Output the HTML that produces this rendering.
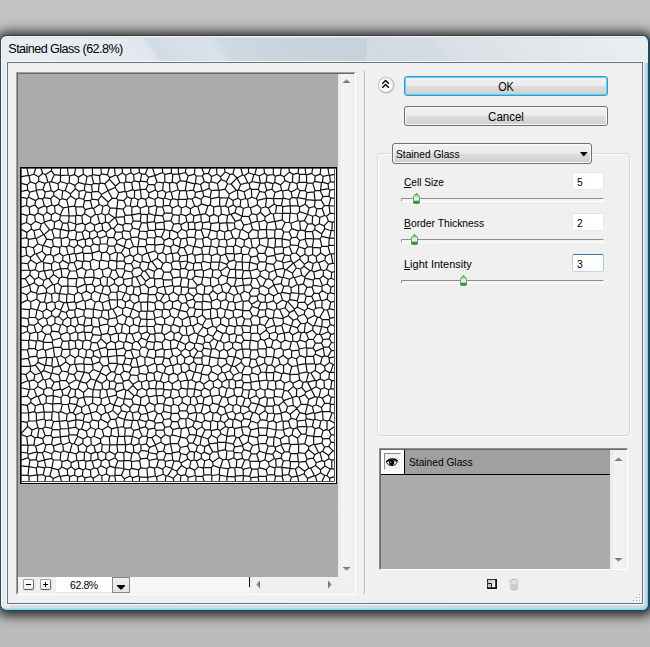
<!DOCTYPE html>
<html><head><meta charset="utf-8"><title>Stained Glass</title>
<style>
*{box-sizing:border-box;margin:0;padding:0}
html,body{width:650px;height:647px;overflow:hidden}
body{position:relative;background:#bfbfbf;font-family:"Liberation Sans",sans-serif;font-size:11px;color:#000}
.abs{position:absolute}
#bg{left:0;top:0;width:650px;height:647px;background:linear-gradient(#c2c2c2 0,#c1c1c1 300px,#bcbcbc 100%)}
#win{left:0;top:35px;width:650px;height:576px;border-radius:7px;background:#d3dde6;
 box-shadow:0 1px 12px 4px rgba(0,0,0,.8);border:1px solid #3a3e42;border-left-color:#3c464d;border-right:2px solid #1d4a5c;border-bottom-color:#1d4a5c}
#winin{left:0;top:0;width:647px;height:574px;border-radius:6px;border:1px solid #f4f8fb;border-right-color:#7dcdeb;border-bottom-color:#86d6f2;
 background:linear-gradient(90deg,#e3eaf0 0,#e3eaf0 8px,#d3dde6 9px,#d0dbe4 100%);box-shadow:inset -1px -1px 0 rgba(134,214,242,.45)}
#tbar{left:1px;top:1px;width:645px;height:25px;border-radius:5px 5px 0 0;background:linear-gradient(90deg,rgba(255,255,255,0) 363px,rgba(255,255,255,.2) 364px),linear-gradient(55deg,#e8eef3 1.32%,#e4ebf1 16.39%,#e0e7ee 23.32%,#d1dbe4 24.38%,#d6dfe7 27.69%,#d9e2ea 33.27%,#cfd9e2 35.38%,#c7d2dc 46.53%,#c6d1da 58.59%,#c8d3dc 67.03%,#cfd9e1 68.24%,#d6dfe6 79.69%,#e0e7ed 91.75%,#e5ebf0 98.98%)}
#title{left:8.3px;top:41.6px;font-size:12.6px;line-height:14px;letter-spacing:-.55px;white-space:nowrap}
#client{left:6px;top:61px;width:638px;height:544px;background:#6d7277;border:1px solid #f6f9fb;padding:1px}
#client div{width:100%;height:100%;background:#f0f0f0}
.t{white-space:nowrap;line-height:13px;font-size:11.5px;transform-origin:0 50%}
u{text-decoration:underline}
</style></head><body>
<div id="bg" class="abs"></div>
<div id="win" class="abs"><div id="winin" class="abs"><div id="tbar" class="abs"></div></div></div>
<div id="title" class="abs">Stained Glass (62.8%)</div>
<div id="client" class="abs"><div></div></div>

<!-- preview panel -->
<div class="abs" style="left:16px;top:72px;width:340px;height:523px;background:#f0f0f0;border:1px solid #a0a0a0;border-right-color:#fff;border-bottom-color:#fff"></div>
<div class="abs" style="left:17px;top:73px;width:337px;height:520px;border-left:1px solid #696969;border-top:1px solid #696969"></div>
<div class="abs" style="left:18px;top:74px;width:320px;height:503px;background:#ababab"></div>
<!-- stained glass image -->
<svg class="abs" style="left:20px;top:167px" width="318" height="318" viewBox="0 0 318 318">
<defs><clipPath id="cp"><rect x="0" y="0" width="317" height="317"/></clipPath></defs>
<rect x="0" y="0" width="317" height="317" fill="#fff"/>
<g clip-path="url(#cp)"><path fill="none" stroke="#111" stroke-width="1.2" stroke-linecap="round" d="M7.7 132.9l-7.7 3.8M7.7 132.9l-1-5.1M6.7 127.8l-6.7-2.7M8 151.7l-8-1.1M8 151.7l1.2-1.2M9.2 150.5l.1-7.8M9.3 142.7l-9.3-.8M153.7 57.1l5.3-.7M159.3 48.3l-.3 8.1M159.3 48.3l-6.3-.7M153.7 57.1l-2.9-3.5M150.8 53.6l2.2-6M253.1 16.7l-1.1 5.5M253.1 16.7l-7-1.8M246.1 14.9l-1.4 1M244.7 15.9l2.1 7.5M252 22.2l-5.2 1.2M254.8 15.4l-1.7 1.3M254.8 15.4l5.7 2.5M261.6 23.3l-1.1-5.4M255 25.4l6.6-2.1M255 25.4l-3-3.2M255.2 9.2l-1.9-1.7M247 8.3l6.3-.8M254.8 15.4l.4-6.2M247 8.3l-.9 6.6M262.1 71.8l7.7 1.5M262.1 71.8l.1 7.9M263.6 80.9l-1.4-1.2M263.6 80.9l5.8-1.4M269.8 73.3l.8 4.5M269.4 79.5l1.2-1.7M263.8 65l-1.8 6.7M263.8 65l5.3-.2M271.6 70.8l-2.5-6M271.6 70.8l-1.8 2.5M262 71.7l.1 .1M255.1 80.1l.4-8.7M262 71.7l-6.5-.3M255.1 80.1l7.1-.4M212.9 6.8l1.7-6.8M212.9 6.8l-2.8 .5M204.1 0l1.1 5M205.2 5l4.9 2.3M190.1 30.5l1.3-6.9M190.1 30.5l-6.3-1.4M183.8 29.1l-1.2-4.9M182.6 24.2l6.5-2.8M191.4 23.6l-2.3-2.2M196.9 7.3l-5.3 2.2M196.9 7.3l3.7 2.5M200.6 9.8l.6 2.7M201.2 12.5l-3.8 4M197.4 16.5l-6.5-1.8M191.6 9.5l-.7 5.2M205.2 5l-4.6 4.8M210.1 7.3l-3.8 7.5M206.3 14.8l-5.1-2.3M198.6 22.9l-1.2-6.4M199.2 23.4l-.6-.5M207.6 16.8l-1.3-2M199.2 23.4l5.9-1.3M207.6 16.8l-2.5 5.3M189.1 16.1l0 5.3M198.6 22.9l-7.2 .7M189.1 16.1l1.8-1.4M304.9 299l-.4-4.4M300.5 302.8l4.4-3.8M300.5 302.8l-5-4.3M296.1 295.7l-.6 2.8M296.1 295.7l6-2.1M302.1 293.6l2.4 1M311.8 301.6l5.2 1.5M311.8 301.6l0-8.4M311.8 293.2l5.2-.8M310.3 302l-5.4-3M310.3 302l1.5-.4M308.9 291.7l-4.4 2.9M308.9 291.7l2.9 1.5M16.1 292.6l1.9 2M16.1 292.6l-6.1 .5M10 293.1l-1.1 6.6M16.2 301l-7.3-1.3M16.2 301l1.3-1.3M17.5 299.7l.5-5.1M49.9 285.2l2.2-8.3M49.9 285.2l6.2 1.8M56.1 287l2.7-2.3M58.8 284.7l-.8-5.9M58 278.8l-3.9-2.2M54.1 276.6l-2 .3M80.9 93.2l.9-7.3M80.9 93.2l7.6 1.3M88.5 94.5l1.4-1.3M89.9 93.2l-.2-5.5M89.7 87.7l-3.2-2.8M81.8 85.9l4.7-1M95.9 85l-6.2 2.7M97.5 86l-1.6-1M97.5 86l-.9 8.1M96.6 94.1l-6.7-.9M10.8 124.4l-1.3-6.2M10.8 124.4l5.6 1.8M16.4 126.2l2.2-7M18.6 119.2l-4.4-3.4M14.2 115.8l-4.7 2.4M10.8 124.4l-4.1 3.4M0 121.3l9.3-3.1M9.3 118.2l.2 0M8.9 309.1l-.9-.8M8.9 309.1l8.2-1.3M17.1 307.8l-.9-6.8M8.9 299.7l0 0M8 308.3l.9-8.6M9.2 222.6l-9.2-2.1M7.4 229.1l1.8-6.5M7.4 229.1l-7.4 .9M57.9 221.6l2.2-7M56.3 212.7l3.8 1.9M55.5 222.7l2.4-1.1M55.5 222.7l-4.5-1.2M56.3 212.7l-7.4 4M48.9 216.7l.2 2.5M49.1 219.2l1.9 2.3M10 293.1l-1.9-2.5M8.1 290.6l.1-3.5M16.1 292.6l1.5-7.3M17.6 285.3l-.5-.4M17.1 284.9l-8.9 2.2M17.9 195.4l-2.5 2.8M17.9 195.4l7.1 3.2M15.4 198.2l5.6 7.4M25 198.6l-1.4 5M23.6 203.6l-2.6 2M32.1 206l-.6 .5M31.5 206.5l-7.9-2.9M25.6 198.2l6.2 .9M33 200.3l-1.2-1.2M32.1 206l.9-5.7M25.6 198.2l-.6 .4M5.8 207.7l2.1 6M5.8 207.7l4.5-3.8M10.3 203.9l4.5 3.9M14.8 207.8l-1 5M13.8 212.8l-4.7 1.4M7.9 213.7l1.2 .5M0 217l7.9-3.3M0 206.5l5.8 1.2M10.5 199.4l-10.5-.1M10.5 199.4l-.2 4.5M10.5 199.4l.1-.1M10.6 199.3l4.8-1.1M21 205.6l0 .1M21 205.7l-6.2 2.1M10 222l-.8 .6M10 222l-.9-7.8M94 238.1l3.6-7.8M94 238.1l-3.9-1.8M88.5 230l1.6 6.3M88.5 230l7.7-1.9M96.2 228.1l1.4 2.2M166.7 110.9l2.1 1.5M166.7 110.9l-5.1 0M161.5 119.9l6.4 .2M168.8 112.4l-.9 7.7M161.5 119.9l-1.2-1.1M160.3 118.8l1.3-7.9M160.3 118.8l-6.5 .8M161.5 119.9l-.5 7.4M158.8 128.6l2.2-1.3M158.8 128.6l-5.5-3.6M153.3 125l.5-5.4M158 133.1l.8-4.5M152.5 135.1l-2.8-1.9M152.5 135.1l5.5-2M149.7 133.2l-1.1-5.2M153.3 125l-4.7 3M113.8 93l-.4-3.4M113.8 93l-2.5 3.6M111.3 96.6l-5.7-.2M110.2 87.9l-5.3 2.4M110.2 87.9l3.2 1.7M104.9 90.3l-1 3.6M103.9 93.9l1.7 2.5M122.2 94.4l-.1-5.9M120.4 95.8l1.8-1.4M117.9 86.5l4.2 2M117.9 86.5l-4.5 3.1M120.4 95.8l-6.6-2.8M109.2 81.9l1 6M109.2 81.9l-4.6-1.6M104.6 80.3l-3.3 5.3M101.3 85.6l3.6 4.7M96.8 94.3l7.1-.4M96.6 94.1l.2 .2M97.5 86l3.8-.4M96.8 94.3l-.1 7.2M104 101.8l-7.3-.3M104 101.8l1.6-5.4M9.1 157.7l-1.1-6M7.3 159.9l-7.3-1.3M9.1 157.7l-1.8 2.2M112.2 111l-.2 7.5M106.9 119.7l5.1-1.2M112.2 111l-8.4 1.3M106.9 119.7l-3.4-3M103.5 116.7l.3-4.4M95.4 102.8l1.3-1.3M95.4 102.8l3.3 7M105 103.6l-1-1.8M105 103.6l-2.7 6.7M98.7 109.8l3.6 .5M14.2 115.8l.6-3.2M18.4 110.3l-3.6 2.3M18.4 110.3l5.6 3.1M18.6 119.2l4.2-1M24 113.4l-1.2 4.8M16.4 126.2l.7 1.1M22.8 118.2l3.5 3.6M26.6 125.5l-.3-3.7M26.6 125.5l-.4 .3M17.1 127.3l9.1-1.5M10.9 141.4l-.2-6.6M10.9 141.4l6.1 1.6M17 143l.4-.2M17.4 142.8l2.8-7.8M10.7 134.8l6.1-2.8M16.8 132l3.4 3M9.3 142.7l1.6-1.3M7.7 132.9l3 1.9M9.2 150.5l6.4 0M15.6 150.5l1.4-7.5M22.7 144.7l-5.3-1.9M22.7 144.7l.8 5.8M23.5 150.5l-5.3 2.6M15.6 150.5l2.6 2.6M24.5 135.1l-4.3-.1M26.4 136.4l-1.9-1.3M26.7 142l-.3-5.6M26.7 142l-4 2.7M17.1 127.3l-.3 4.7M24.5 135.1l1.7-9.3M174.7 56.2l6.5-1.7M174.7 56.2l-1.4-1.3M173.3 54.9l.5-6.1M173.8 48.8l6.3-1.5M181.2 54.5l-.3-6.8M180.9 47.7l-.8-.4M187.9 38.9l-2.5 7.8M187.9 38.9l-6.5-2M181.4 36.9l-3.5 2.7M177.9 39.6l2.2 7.7M185.4 46.7l-4.5 1M160.7 57.6l1 4.7M160.7 57.6l6.1-2.9M168.2 55.5l-1.4-.8M168.2 55.5l.4 7M161.7 62.3l4.8 2M168.6 62.5l-2.1 1.8M165.9 48.9l.9 5.8M161 47.2l4.9 1.7M161 47.2l-1.7 1.1M159 56.4l1.7 1.2M170.3 46.5l3.5 2.3M170.3 46.5l-4.4 2.4M173.3 54.9l-5.1 .6M175 62.2l-6.4 .3M175 62.2l-.3-6M167.4 70.2l-.9-5.9M167.4 70.2l7.3 .3M175 62.2l1.1 1M174.7 70.5l1.4-7.3M166.5 71.2l-5.5 .7M161 71.9l-3-1.9M166.5 71.2l.9-1M161.7 62.3l-4.1 3.6M158 70l-.4-4.1M153.7 57.1l-2.2 6M157.6 65.9l-6.1-2.8M193.7 47.4l4.7 2.1M193.7 47.4l-4.1 2M189.6 49.4l-.2 5.3M198.6 55.3l-7.6 1.3M198.6 55.3l-.2-5.8M189.4 54.7l1.6 1.9M182.5 55.9l-1.3-1.4M182.5 55.9l6.9-1.2M185.4 46.7l4.2 2.7M190.3 37.9l3.3 2M190.3 37.9l.6-6.3M193.6 39.9l6.1-1.1M190.9 31.6l8.2-1.5M199.7 38.8l0-8.1M199.7 30.7l-.6-.6M187.9 38.9l2.4-1M193.7 47.4l-.1-7.5M183.8 29.1l-2.7 3.2M181.1 32.3l.3 4.6M190.1 30.5l.8 1.1M199.2 23.4l-.1 6.7M209.2 27.1l-.6 3.4M207.9 31l.7-.5M205.1 22.1l4.1 5M207.9 31l-8.2-.3M215.1 61.2l-.7-5.2M210.7 64l4.4-2.8M210.7 64l-2.6-.6M208.1 63.4l-1.4-7.7M206.7 55.7l7.7 .3M215.1 61.2l5.3 2.1M220.7 52.6l-5.3 1.8M220.7 52.6l3.1 5.6M222.2 62.4l-1.8 .9M223.8 58.2l-1.6 4.2M214.4 56l1-1.6M204.8 65l-5.4-1.9M204.8 65l-.2 7M204.6 72l-5.4 1M197.2 64.7l-.3 6.5M197.2 64.7l2.2-1.6M196.9 71.2l2.3 1.8M208.1 63.4l-3.3 1.6M206.6 55.7l.1 0M199.7 56.4l6.9-.7M199.7 56.4l-.3 6.7M204.6 72l1.9 1.3M210.7 64l2.3 6.7M206.5 73.3l6.5-2.6M218.8 70.7l1.6-7.4M218.8 70.7l-2.9 1.4M213 70.7l2.9 1.4M199.2 73l-.5 6.2M190.9 79l.3-6.1M191.2 72.9l5.7-1.7M190.9 79l5.9 1.8M196.8 80.8l1.9-1.6M206.5 73.3l.7 5.7M207.2 79l-1.4 1.5M198.7 79.2l7.1 1.3M184 70.7l3.9-.5M184 70.7l-2.9-7.9M187.9 70.2l2.6-7.1M182.4 61.5l-1.3 1.3M182.4 61.5l7.9 1.1M190.3 62.6l.2 .5M197.2 64.7l-6.7-1.6M191.2 72.9l-3.3-2.7M176.1 63.2l5-.4M182.5 55.9l-.1 5.6M191 56.6l-.7 6M199.7 56.4l-1.1-1.1M161.6 110.9l-1.3-1.1M159.9 102.8l.4 7M168.5 103.6l-1.8 7.3M168.5 103.6l-3.4-2.3M159.9 102.8l1.1-1.1M165.1 101.3l-4.1 .4M176.1 176l6.8 1.4M184.8 175l-1.9 2.4M176.1 176l2.1-8.2M184.8 175l-.7-4.9M178.2 167.8l5.9 2.3M241 41.2l-3.6-3.3M237.4 37.9l0-4.6M241 41.2l4.5-1.4M245.5 39.8l1.1-8.6M246.6 31.2l-9.2 2.1M212.9 6.8l4 4.2M220.6 0l2 8M222.6 8l-5.7 3M222.6 8l1.8 .4M224.4 8.4l4.3-2.7M228.7 5.7l-.4-5.7M317 113.8l-5.9-2.6M317 103.4l-5.2 2.1M311.8 105.5l-.7 5.7M300.7 86.1l-.4-5.2M300.3 80.9l-7.5-.6M296.1 89.6l-3.5-2.1M296.1 89.6l4.6-3.5M292.6 87.5l.2-7.2M295.7 48.2l-3.1 1.1M299.8 50.5l-4.1-2.3M299.8 50.5l-.5 6.3M292.6 49.3l-.4 7.3M292.2 56.6l2.9 2.2M299.3 56.8l-4.2 2M246.9 80.2l-7.3-2.7M246.9 80.2l-2.2 6M236.1 81.1l3.5-3.6M236.1 81.1l2.3 5.3M238.4 86.4l6.3-.2M222.2 62.4l6.3 3.8M230.9 56.5l1.7 5.8M223.8 58.2l7.1-1.7M228.5 66.2l4.1-3.9M261.7 62.4l-5.3-.6M261.7 62.4l3.4-6.9M256.4 61.8l-1.3-7.1M255.1 54.7l7.1-1.8M262.2 52.9l2.9 2.6M262.7 24l5.6-1.1M262.7 24l.6 7.2M271.2 25.1l-2.9-2.2M263.3 31.2l6.4 1.3M271.2 25.1l1 5.2M272.2 30.3l-2.5 2.2M278.2 78.5l.6 1.2M278.8 79.7l6.1 2.2M284.9 81.9l2.8-2.1M287.7 79.8l-2.8-7.7M278.2 78.5l1.5-5M279.7 73.5l5.2-1.4M278.2 78.5l-7.6-.7M271.6 70.8l5.1-.6M279.7 73.5l-3-3.3M276.7 70.2l1.7-6.3M269.1 64.8l2.7-3.2M278.4 63.9l-6.6-2.3M269.4 55.4l-4.3 .1M263.8 65l-2.1-2.6M269.4 55.4l1.5 .9M270.9 56.3l.9 5.3M260.4 7.9l.9-7.9M260.4 7.9l-5.2 1.3M253.3 7.5l0-7.5M311.1 111.2l-2.8 1.3M308.3 112.5l-1.2 4.5M317 117.7l-6 2.4M311 120.1l-3.9-3.1M310.2 125.6l6.8 2.2M311 120.1l-.8 5.5M239.2 142.7l6.3 .3M239.2 142.7l-2 6M237.2 148.7l2.5 2.2M239.7 150.9l6-1.9M245.5 143l.2 6M244.7 158.7l4.5-7.3M244.7 158.7l-4.9-1.8M239.8 156.9l-.1-6M245.7 149l3.5 2.4M254.6 158.4l-2-7.2M246.3 161.2l8.3-2.8M244.7 158.7l1.6 2.5M249.2 151.4l3.4-.2M261.7 158.3l-5.8 1.1M261.7 158.3l1.6-2M254.6 158.4l1.3 1M263.3 156.3l-.2-4.7M263.1 151.6l-9.8-1.1M252.6 151.2l.7-.7M296.8 41.9l5.3-.6M295.7 48.2l1.1-6.3M299.8 50.5l4.7-2M304.5 48.5l-2.4-7.2M301 32.8l3.3 5.8M295.1 33.4l5.9-.6M294.4 39.5l2.4 2.4M294.4 39.5l.7-6.1M302.1 41.3l2.2-2.7M292.2 56.6l-4.3 .5M287.9 57.1l-3.5-3.5M292.6 49.3l-5-2M284.4 53.6l3.2-6.3M284.9 63.9l-4.4-1.1M287.9 57.1l-3 6.8M280.5 62.8l-.9-8.4M284.4 53.6l-4.8 .8M280.5 62.8l-2.1 1.1M270.9 56.3l7.2-2.8M279.6 54.4l-1.5-.9M289.1 41l5.3-1.5M289.1 41l-1.6 6.2M287.5 47.2l.1 .1M267.7 196.3l-4.1 2.2M263.6 198.5l-.1 7.3M267.7 196.3l4.1 3.2M263.5 205.8l6.2 1.6M269.7 207.4l2.1-7.9M237.5 158.3l2.3-1.4M246.3 161.2l0 1.9M237.5 158.3l.1 7.7M237.6 166l2.3 1.7M239.9 167.7l6.4-4.6M255.4 165l.5-5.6M255.4 165l-5.9 1.8M249.5 166.8l-3.2-3.7M276.2 252.5l-5-1.2M276.2 252.5l3.5-6.9M279.7 245.6l-2.8-4.2M276.9 241.4l-6.8 5.9M270.1 247.3l1.1 4M295.5 298.5l-4.8 2.7M300.5 302.8l.1 3M300.6 305.8l-5.2 3.2M295.4 309l-1-.4M290.7 301.2l3.7 7.4M286.8 317l.8-5.6M295.4 309l2.2 8M287.6 311.4l6.8-2.8M293.3 291.2l2.8 4.5M302.1 293.6l-2.2-7.9M293.3 291.2l1.5-3.5M299.9 285.7l-1.4-.1M294.8 287.7l3.7-2.1M304.5 280l-1.8 4.3M304.5 280l4.2-.7M302.7 284.3l5.9 4.2M308.7 279.3l4.2 4.6M312.9 283.9l-4.3 4.6M308.9 291.7l-.3-3.2M299.9 285.7l2.8-1.4M311.1 275.2l5.9 .8M311.1 275.2l-2.4 4.1M317 283.8l-4.1 .1M311.1 275.2l-1.7-3.8M317 267.8l-5.8 0M311.2 267.8l-1.8 3.6M309 263.5l8-5.8M309 263.5l2.2 4.3M311.5 175.5l-2.6 4.3M308.9 179.8l-5.3 .4M309.3 171.8l-6.3 .7M303 172.5l-1.5 3.7M311.5 175.5l-2.2-3.7M303.6 180.2l-2.1-4M263.5 222.5l1-6.3M263.5 222.5l.6 .9M270 214l-5.5 2.2M268 224l-3.9-.6M270 214l2.9 2.3M268 224l5.4-4.4M272.9 216.3l.5 3.3M17.1 307.8l.4 .3M17.5 299.7l7.2 1.1M24.7 300.8l-1.5 6.9M17.5 308.1l5.7-.4M94 238.2l6.5 1.4M94 238.2l-1.3 5.2M100.5 239.6l1 4M101.5 243.6l-3.5 4.5M92.7 243.4l5.3 4.7M90.1 236.3l-5.7 2.7M94 238.1l0 .1M85.8 245.4l-1.4-6.4M85.8 245.4l2.2 .7M92.7 243.4l-4.7 2.7M88 246.1l2.8 6.3M90.8 252.4l-3 3.5M85.8 245.4l-4.5 2.8M81.3 248.2l-.6 4M80.7 252.2l7.1 3.7M90.8 252.4l4.9-.1M98 248.1l0 2M95.7 252.3l2.3-2.2M107.1 245.3l-2.6 7.2M101.5 243.6l5.6 1.7M98 250.1l6.5 2.4M104.5 252.6l0-.1M103.4 259.7l-5.5 .8M103.4 259.7l1.1-7.1M95.7 252.3l1.7 8M97.4 260.3l.5 .2M112.5 253.7l-8-1.1M112.5 253.7l-1.6 6.9M103.4 259.7l1.9 1.6M105.3 261.3l5.6-.7M31.6 277.2l1.1-6.6M31.6 277.2l-5.8 .7M25.8 277.9l-2.2-2M23.6 275.9l-.9-4.3M22.7 271.6l2.5-2.9M32.7 270.6l-1.8-2.2M25.2 268.7l5.7-.3M15 270.9l-3.9-2.7M15 270.9l-1.1 6.9M13.9 277.8l-5.7 .6M6.7 269.7l4.4-1.5M6.7 269.7l1 8.3M7.7 278l.5 .4M15.7 279.3l-1.8-1.5M15.7 279.3l7.9-3.4M17.6 270.1l5.1 1.5M17.6 270.1l-2.6 .8M8.2 287.1l-.8-1.1M7.4 286l.8-7.6M17.1 284.9l-1.4-5.6M23.2 307.7l2.4 1.8M29.8 308.8l-4.2 .7M32.1 301.1l-2.3 7.7M32.1 301.1l-.2-.3M24.7 300.8l1.1-.8M31.9 300.8l-6.1-.8M18 294.6l6.4-1.5M25.8 300l-1.4-6.9M49.7 275.3l2.4 1.6M49.9 285.2l-1.1 .4M42.9 277.8l.5 6M49.7 275.3l-6.8 2.5M48.8 285.6l-5.4-1.8M33.4 278.9l7.8-2.5M42.9 277.8l-1.7-1.4M33.4 278.9l.8 4.9M34.2 283.8l6.6 1.7M43.4 283.8l-2.6 1.7M41.2 276.4l-.9-6.6M32.7 270.6l7.6-.8M33.4 278.9l-1.8-1.7M40.3 269.8l0 0M49.7 275.3l-1.4-6.4M40.3 269.8l8-.9M32.3 262.4l7.4 .4M30.9 268.4l1.4-6M40.3 269.8l-.6-7M58 278.8l4.7-2.4M64.4 285.5l-5.6-.8M66 284.5l.9-4.6M64.4 285.5l1.6-1M66.9 279.9l-4.2-3.5M57.7 269.2l-3.6 7.4M57.7 269.2l5.4 2.7M62.7 276.4l.4-4.5M40.2 293l.6-7.5M40.2 293l1.8 1.6M48.8 285.6l-1.2 7.5M47.6 293.1l-5.6 1.5M31.9 300.8l1.4-7.8M33.3 293l6.9 0M32.1 301.1l6.4 1.8M38.5 302.9l3.1-2.9M42 294.6l-.4 5.4M89.2 284.4l5.9 3.1M85.9 286.5l3.3-2.1M85.9 286.5l-.2 5.4M85.7 291.9l3.2 1.9M88.9 293.8l6.2-3.1M95.1 290.7l0-3.2M81.2 294.1l4.5-2.2M81.6 284.3l4.3 2.2M81.6 284.3l-4.1 1.6M81.2 294.1l-2.9-2M78.3 292.1l-.8-6.2M32.8 117.3l-6.5 4.5M34.3 117.7l.7 8M34.3 117.7l-1.5-.4M26.6 125.5l4.9 1.7M31.5 127.2l3.5-1.5M26.4 136.4l5.8-1.7M31.5 127.2l.7 7.5M24 113.4l2.8-1.9M32.8 117.3l-3.7-5.6M29.1 111.7l-2.3-.2M95.4 102.8l-3.5 .4M88.5 94.5l0 6.1M91.9 103.2l-3.4-2.6M29.1 111.7l4.3-4.1M33.4 107.6l6 3.8M34.3 117.7l3.5-1.4M37.8 116.3l1.6-4.9M41 101.9l-.5-.3M33.3 104.3l7.2-2.7M33.4 107.6l-.1-3.3M41 101.9l1 8M39.4 111.4l2.6-1.5M88.2 70.6l5.6-.3M88.2 70.6l-1.2 6.4M87 77l1.5 1.9M88.5 78.9l5.9 .2M93.8 70.3l2.9 3.4M94.4 79.1l2.2-2.5M96.6 76.6l.1-2.9M86.4 68.7l1.8 1.9M86.4 68.7l-.3-3.4M86.1 65.3l5.1-4.2M93.6 61.7l-2.4-.6M95.6 64.8l-2-3.1M95.6 64.8l-1.8 5.5M79.9 71.3l.5 5.6M80.4 76.9l6.6 .1M86.4 68.7l-6.5 2.6M86.5 84.9l2-6M79.2 83.9l2.6 2M79.2 83.9l-.1-5.7M79.1 78.2l1.3-1.3M95.9 85l-1.5-5.9M102 65.2l-6.4-.4M102.7 70.7l-6 3M102.7 70.7l-.7-5.5M104.4 79.9l-7.8-3.3M104.6 80.3l-.2-.4M104.4 79.9l1.8-7.1M106.2 72.8l-3.5-2.1M58.4 15.4l-.1-5.3M58.4 15.4l6.7 2M58.3 10.1l5.1-2.8M65.1 17.4l.6-.4M65.7 17l1.3-7.5M67 9.5l-3.6-2.2M73.7 16.3l-2-7.9M71.7 8.4l-4.7 1.1M71.6 17.9l-5.9-.9M71.6 17.9l2.1-1.6M8.4 8.3l-1.6-8.3M0 9.8l8.4-1.5M7.2 17.9l-7.2-1.8M7.2 17.9l3-3M10.2 14.9l-1.1-6.1M8.4 8.3l.7 .5M7.8 23.1l-.6-5.2M7.8 23.1l-7.8 1.5M86.1 65.3l-3.4-2.2M79.9 71.3l-2.5-2M82.7 63.1l-5.5 2.4M77.4 69.3l-.2-3.8M74.6 58.2l-.2 5M74.6 58.2l5-2.1M82.7 63.1l-.8-6.3M79.6 56.1l2.3 .7M77.2 65.5l-2.8-2.3M77.4 69.3l-5.2 2.9M79.1 78.2l-5.9-1.4M73.2 76.8l-1-4.6M7.4 183l-7.4-.3M7.4 183l1.8 7.1M8.4 191.4l-8.4 .9M9.2 190.1l-.8 1.3M9 181.5l6.3 .2M17.5 183.7l-2.2-2M9 181.5l-1.6 1.5M17.5 183.7l-.9 5.5M16.6 189.2l-7.4 .9M10.6 199.3l-2.2-7.9M16.6 189.2l1.7 2.2M17.9 195.4l.4-4M8.1 290.6l-8.1 3M7.4 286l-7.4-.9M12.1 263l-1 5.2M6.7 269.7l-6.2-2.6M12.1 263l-4.4-3.5M7.7 259.5l-7.2 7.6M13.8 212.8l4 3.1M21 205.7l2.3 6.5M23.3 212.2l-5.5 3.7M7.7 278l-7.7 .2M7.1 255.4l-7.1-1.3M7.1 255.4l.6 4.1M64.6 33.6l-.9-1.1M64.6 33.6l5.8-.1M70.4 33.5l1.5-1.4M71.9 32.1l-.5-6.5M71.4 25.6l-5.2-.7M63.7 32.5l2.5-7.6M72.3 24.8l-.9 .8M71.6 17.9l.7 6.9M65.1 17.4l-.8 5.6M64.3 23l1.9 1.9M88.5 46.8l-3.2 1.4M88.5 46.8l6.2 4M85.3 48.2l.2 6.9M94.7 50.8l-6.1 5.3M88.6 56.1l-3.1-1M77.5 47.8l4.1-1.3M77.5 47.8l2.1 8.3M81.6 46.5l3.7 1.7M81.9 56.8l3.6-1.7M91.2 61.1l-2.6-5M82.9 39.3l-1.3 7.2M82.9 39.3l4.6-1.4M88.5 46.8l1.6-6M87.5 37.9l2.6 2.9M76.1 213.4l5.7 3M82.6 221.7l-.8-5.3M76 213.5l.1-.1M82.6 221.7l-2.3 1.5M76 213.5l-2.6 9M80.3 223.2l-6.9-.7M100.5 239.6l3.1-3M97.6 230.3l6.3 1.9M103.6 236.6l.3-4.4M109.9 244l-2.8 1.3M109.9 244l.1-3.3M103.6 236.6l6.4 4.1M76.1 213.4l4.3-7.5M81.8 216.4l5.1-3.8M86.9 212.6l-.7-3.8M86.2 208.8l-5.8-2.9M126.9 144.4l-5.7-.5M126.9 144.4l.8-.6M127.7 143.8l-.2-8.9M121.2 143.9l-.4-8.5M127.5 134.9l-6.7 .5M113.3 109.7l2.9 .4M113.3 109.7l-1.6-4.7M116.2 110.1l4.4-1.9M111.7 105l1.8-3.4M113.5 101.6l6.2-1.2M120.6 108.2l2.2-4M119.7 100.4l3.1 3.8M103.8 112.3l-1.5-2M112.2 111l1.1-1.3M105 103.6l6.7 1.4M120.5 118.5l-4.3-8.4M124.6 117.2l-4.1 1.3M125.7 114.2l-5.1-6M124.6 117.2l1.1-3M111.3 96.6l2.2 5M120.4 95.8l-.7 4.6M114.1 120.1l5.6-.7M114.1 120.1l-1 6.8M119.7 119.4l1.3 7M113.1 126.9l5.4 2.2M118.5 129.1l2.5-2.7M120.5 118.5l-.8 .9M112 118.5l2.1 1.6M110.2 128.2l-4.4-2.4M106.9 119.7l-1.1 6.1M110.2 128.2l2.9-1.3M128 126.9l-7-.5M128.7 121l-.7 5.9M128.7 121l-4.1-3.8M133.7 111l.7-6.6M133.7 111l-3.5 .1M130.2 111.1l-5.1-7.2M134.4 104.4l-6.6-2.6M127.8 101.8l-2.7 2.1M122.8 104.2l2.3-.3M125.7 114.2l4.5-3.1M129 95.9l1.8-1.3M129 95.9l-1.2 5.9M130.8 94.6l1.2 0M132 94.6l5.2 7.1M137.2 101.7l-2.8 2.7M129 95.9l-6.8-1.5M152.9 111.2l7.4-1.4M159.9 102.8l-7.5-1M152.9 111.2l-2.6-6.4M150.3 104.8l2.1-3M110.4 71.6l.8-1M110.4 71.6l3.1 7.7M111.2 70.6l6.9-.7M113.5 79.3l3.9 .6M118.1 69.9l1.1 1.4M119.2 71.3l-1.2 8.2M117.4 79.9l.6-.4M109.8 64.6l1.4 6M109.8 64.6l-6.4-1M106.2 72.8l4.2-1.2M103.4 63.6l-1.4 1.6M109.2 81.9l4.3-2.6M117.9 86.5l-.5-6.6M141.1 101.3l2-4.8M137.2 101.7l3.9-.4M132 94.6l5.3-3.3M137.3 91.3l5.8 5.2M143.9 105.1l6.4-.3M143.9 105.1l-2.8-3.8M151.2 96.3l1.2 5.5M151.2 96.3l-5.1-1.3M146.1 95l-3 1.5M130.8 94.6l-2.9-8.5M122.1 88.5l5.1-2.6M127.9 86.1l-.7-.2M118 79.5l7.3 .2M127.2 85.9l-1.9-6.2M126 72.6l-6.8-1.3M126 72.6l.9 4.7M126.9 77.3l-1.6 2.4M25.6 198.2l1.1-7.8M31.8 199.1l.7-8.4M32.5 190.7l-5.8-.3M18.3 191.4l8.1-1.2M26.7 190.4l-.3-.2M18.2 153.1l-.3 2.5M9.1 157.7l5.2 .7M14.3 158.4l3.6-2.8M7.6 164.3l-7.6 3M7.6 164.3l2.3 2.4M9.9 166.7l-.6 6.2M8.6 173.5l-8.6-.4M8.6 173.5l.7-.6M7.3 159.9l.3 4.4M15.9 165l-1.6-6.6M15.9 165l-6 1.7M9 181.5l-.4-8M15.3 181.7l1.1-7.6M16.4 174.1l-7.1-1.2M119.1 134.4l-.6-5.3M119.1 134.4l-4.8 2.2M110.2 128.2l-.4 4.7M109.8 132.9l4.5 3.7M119.4 145.1l1.8-1.2M119.4 145.1l-6.8-3.1M119.1 134.4l1.7 1M114.3 136.6l-1.7 5.4M80.9 171.8l.2-3.5M80.9 171.8l5.8 5.2M81.6 167.6l-.5 .7M87.7 166.4l-6.1 1.2M86.7 177l4.2-2.8M87.7 166.4l2.3 1.7M90 168.1l.9 6.1M86.7 177l-.7 3.4M95.8 182.2l-8.1 .5M95.8 182.2l-.5-6.3M86 180.4l1.7 2.3M95.3 175.9l-4.4-1.7M35 125.7l4.3 1.2M39.3 126.9l-.4 6.8M32.2 134.7l2.6 1.1M38.9 133.7l-4.1 2.1M173.3 102.5l.4-5.8M168.5 103.6l4.8-1.1M165.1 101.3l2.8-6.4M173.7 96.7l-5.8-1.8M149.8 63.9l1.7-.8M149.8 63.9l-.3 7M158 70l-4.8 3.1M149.5 70.9l3.7 2.2M144.7 62.5l-3.2 7.6M149.8 63.9l-5.1-1.4M141.5 70.1l2.6 3.3M149.5 70.9l-5.4 2.5M159.5 79.9l-6-2.4M161 71.9l-1.5 8M153.2 73.1l.3 4.4M118.1 69.9l1.7-5.9M112.6 61l6.4 1.7M112.6 61l-2.8 3.6M119 62.7l.8 1.3M127.6 70.5l-.7-5.9M127.6 70.5l7.2 .5M134.7 63.4l1.4 6M134.7 63.4l-6.3-.2M128.4 63.2l-1.5 1.4M134.8 71l1.3-1.6M126 72.6l1.6-2.1M119.8 64l7.1 .6M134.6 77.7l.2-6.7M126.9 77.3l7.7 .4M121.5 55.7l5.6 .1M121.5 55.7l-2.5 7M127.1 55.8l1.3 7.4M135.6 62.3l8.9-.1M135.6 62.3l-.1-6.2M135.5 56.1l8.4-.9M144.5 62.2l-.6-7M141.5 70.1l-5.4-.7M144.7 62.5l-.2-.3M134.7 63.4l.9-1.1M127.1 55.8l.1-.1M127.2 55.7l7.1-1M134.3 54.7l1.2 1.4M150.8 53.6l-6.4 .8M144.4 54.4l-.5 .8M135.1 48.5l-.8 6.2M135.1 48.5l.5-.4M144.4 54.4l-1.7-5.5M135.6 48.1l7.1 .8M161 47.2l.3-6.2M161.3 41l4.8-1.8M170.3 46.5l.2-4.7M166.1 39.2l4.4 2.6M177.9 39.6l-3.2-.5M170.5 41.8l4.2-2.7M134.7 17.9l-6.5-.6M125.9 22.2l2.3-4.9M134.7 17.9l.8 5.1M125.9 22.2l3 3.7M135.5 23l-6.6 2.9M135.5 23l2.2 1.8M135 32.5l-6.4-2.4M128.9 25.9l-.3 4.2M135 32.5l2.7-2.2M137.7 30.3l0-5.5M182.4 8.8l-6.2 .2M182.4 8.8l1.8 5.9M176.2 9l-.8 7.4M184.2 14.7l-3.7 2.8M175.4 16.4l5.1 1.1M184 6.8l-2.5-6.8M184 6.8l-1.6 2M174.4 7.2l1.8 1.8M174.4 7.2l.6-7.2M191.6 9.5l-3.2-3.2M188.4 6.3l-4.4 .5M189.1 16.1l-4.9-1.4M182.6 24.2l-.5-.3M182.1 23.9l-1.6-6.4M224 78.7l.4-5.6M224 78.7l6.3 2.8M230.3 81.5l1.9-1.1M232.2 80.4l-1.3-8.4M224.4 73.1l4.5-2.2M228.9 70.9l2 1.1M238.1 70.8l-7.2 1.2M239.3 71.9l-1.2-1.1M239.3 71.9l.3 5.6M236.1 81.1l-3.9-.7M228.5 66.2l.4 4.7M218.8 70.7l5.6 2.4M238.1 63.9l-5.5-1.6M238.1 70.8l0-6.9M215.4 54.4l-4.5-7M220.7 52.6l1.2-3.3M221.9 49.3l-7-3.7M210.9 47.4l4-1.8M245.7 94.9l1.3-5.2M244.7 86.2l2.3 3.5M238.4 86.4l-1.4 2.5M245.7 94.9l-6.2 0M237 88.9l2.5 6M222.2 49.1l6.8 .6M221.9 49.3l.3-.2M230.9 56.5l.2-.6M231.1 55.9l-2.1-6.2M167.9 120.1l.9 1M168.8 121.1l-.6 4.5M161 127.3l4.1 .7M168.2 125.6l-3.1 2.4M221.4 80.7l-6-2.7M221.4 80.7l-.3 5.4M221.1 86.1l-6.6 1.2M213.4 79.7l2-1.7M213.4 79.7l.5 7M213.9 86.7l.6 .6M215.9 72.1l-.5 5.9M224 78.7l-2.6 2M207.2 79l6.2 .7M205.7 86.7l8.2 0M205.8 80.5l-.1 6.2M191.4 88.7l-.2 6.4M191.4 88.7l6.1-2.1M191.2 95.1l8.3-.2M197.5 86.6l3 2.1M200.5 88.7l-.8 6M199.7 94.7l-.2 .2M189.1 87l1.2-7.5M190.9 79l-.6 .5M196.8 80.8l.7 5.8M189.1 87l2.3 1.7M205.7 86.7l-.4 .4M205.3 87.1l-4.8 1.6M183 87.5l6.1-.5M191.2 95.1l-.7 .9M183 87.5l0 6.9M183 94.4l7.5 1.6M183 87.5l-.6-.6M175.5 95.3l-.7-6.9M175.5 95.3l5.7 .6M182.4 86.9l-7.6 1.5M183 94.4l-1.8 1.5M175 109.1l-.6-5.5M175 109.1l7.7 1.4M174.4 103.6l7.7-.9M182.7 110.5l.6-.5M183.3 110l.1-6M183.4 104l-1.3-1.3M172.4 112l-3.6 .4M172.4 112l2.6-2.9M173.3 102.5l1.1 1.1M181.2 95.9l.9 6.8M175.5 95.3l-1.8 1.4M190.7 101.4l-.2-5.4M190.7 101.4l-7.3 2.6M183.6 181.2l-1.9 3.2M183.6 181.2l7.9 1.3M191.5 182.5l-1.7 7M189.8 189.5l-6.4-.8M183.4 188.7l-1.7-4.3M184.8 175l4.8 .6M183.6 181.2l-.7-3.8M191.5 182.5l.3-.3M189.6 175.6l2.2 6.6M209 167.8l.4 6.6M209 167.8l5.6-1.4M214.6 166.4l2.1 1.7M216.7 168.1l-1.3 6.7M209.4 174.4l3.2 1.9M215.4 174.8l-2.8 1.5M230.1 165.4l-6.9 .1M230.1 165.4l.6-6M223.2 165.5l-1.5-6.4M221.7 159.1l1-.8M222.7 158.3l8 1.1M231.2 166.6l6.4-.6M237.5 158.3l-5.4-.5M230.1 165.4l1.1 1.2M230.7 159.4l1.4-1.6M174.7 165.8l-2-6.7M174.7 165.8l3 1.2M177.7 167l5.4-7.1M172.7 159.1l5.2-2.8M177.9 156.3l4.6 1.9M183.1 159.9l-.6-1.7M187.2 161.9l.8 5.3M184.1 170.1l3.9-2.9M187.2 161.9l-4.1-2M178.2 167.8l-.5-.8M173.9 140.5l-4.6 .3M173.9 140.5l1.4-5.8M169.3 140.8l-3.2-5.2M175.3 134.7l-1.9-2.6M173.4 132.1l-6.2 1.9M166.1 135.6l1.1-1.6M173.8 129.6l-.4 2.5M173.8 129.6l-5.6-4M165.1 128l2.1 6M161.5 136.5l4.6-.9M158 133.1l3.5 3.4M169.3 140.8l-2.5 4M161.5 136.5l-1.8 6.8M166.8 144.8l-7.1-1.5M152.5 135.1l-.1 5.6M152.4 140.7l7.1 2.7M159.7 143.3l-.2 .1M175.5 142.2l-1.7 6.9M175.5 142.2l6.7 .4M182.3 148l-5.3 2.8M182.3 148l.4-4.9M173.8 149.1l3.2 1.7M182.2 142.6l.5 .5M182.2 134.9l-6.9-.2M173.9 140.5l1.6 1.7M182.2 134.9l0 7.7M186.1 152l-3.8-4M186.1 152l-3.6 6.2M177.9 156.3l-.9-5.5M263.3 31.2l-.5 .4M255 25.4l-1.5 6M262.7 24l-1.1-.7M262.8 31.6l-9.3-.2M245 25.5l1.7 5.6M246.7 31.1l6.6 .6M246.8 23.4l-1.8 2.1M253.5 31.4l-.2 .3M245 25.5l-5.3-1.2M246.7 31.1l-.1 .1M237.4 33.3l-1.1-1.6M239.7 24.3l-3.4 7.4M213.3 37.9l3.2 2.3M216.5 40.2l3.6-.8M218 31.3l2.8 1.7M213 33.4l5-2.1M213 33.4l.3 4.5M220.8 33l-.7 6.4M230.5 40.8l1.2 5.8M230.5 40.8l-1.9-1M229 49.7l2.7-3.1M222.2 49.1l1.1-7.6M228.6 39.8l-5.3 1.7M214.9 45.6l1.6-5.4M220.1 39.4l3.2 2.1M220.6 17.5l-3.7-6.4M220.6 17.5l-2.1 5.4M218.5 22.9l-1.1 .5M211.1 17l5.1 6.2M211.1 17l5.8-5.9M216.2 23.2l1.2 .2M227.8 15.7l-7.2 1.8M227.8 15.7l-3.4-7.3M216.9 11l0 .1M207.6 16.8l3.5 .2M209.2 27.1l7-3.9M213 33.4l-4.4-2.9M218 31.3l-.6-7.9M239.2 9l5.3-2.7M239.2 9l-4.4-1.7M234.8 7.3l2-7.3M244.5 6.3l-.7-6.3M247 8.3l-2.5-2M240.3 16.1l4.4-.2M240.3 16.1l-1.1-7.1M228.7 5.7l5.2 2M233.9 7.7l.9-.4M301.5 15.7l-1 7.4M302.5 15.1l-1 .6M308.1 16.9l-5.6-1.8M308.1 16.9l.5 4.7M308.6 21.6l-8.1 1.5M295 33.3l-.9-8.5M294.1 24.8l1-1.2M295 33.3l.1 .1M301 32.8l2-3.1M295.1 23.6l5-.1M303 29.7l-2.9-6.2M301.5 15.7l-6.8-1.3M292.7 16.4l2-2M292.7 16.4l2.4 7.2M300.1 23.5l.4-.4M309.6 8.3l7.4-1.4M309.6 8.3l.8 6.3M310.4 14.6l6.6 1.3M307.7 0l1.4 8M309.1 8l.5 .3M309.1 8l-6 1.4M308.1 16.9l2.3-2.3M303.1 9.4l-.6 5.7M196.9 7.3l-.4-7.3M188.4 6.3l2.5-6.3M304.8 93.3l-6.1 2.3M304.8 93.3l3.6 4.1M298.7 95.6l2.4 7M308.4 97.4l-1.9 5.1M306.5 102.5l-3.1 1.3M301.1 102.6l2.3 1.2M296.1 89.6l.8 5.1M300.7 86.1l4.9 3.1M305.6 89.2l-.8 4.1M296.9 94.7l1.8 .9M291.7 103.6l2 1.3M293.7 104.9l7.4-2.3M293.3 96.5l3.6-1.8M293.3 96.5l-1.6 7.1M311.8 105.5l-5.3-3M312.8 96.2l4.2 1.3M312.8 96.2l-4.4 1.2M308.3 112.5l-5.1-3.8M303.2 108.7l.2-4.9M304.9 61.7l-3.3 5.1M304.9 61.7l-.8-2.8M304.1 58.9l-4.8-2.1M295.1 58.8l-.4 3.6M301.6 66.8l-6.9-4.4M301.9 79.3l-1.6 1.6M292.4 79.9l.4 .4M292.4 79.9l1.3-7.9M301.9 79.3l-1.9-7.7M300 71.6l-6.3 .4M246.4 62.5l8.5 .7M246.4 62.5l.5 8.2M254.9 63.2l-.2 7.6M254.7 70.8l-6.4 .9M246.9 70.7l1.4 1M239.8 62.6l-1.7 1.3M239.8 62.6l6.6-.2M246.4 62.4l0 .1M239.3 71.9l7.6-1.2M256.4 61.8l-1.5 1.4M255.5 71.4l-.8-.6M247.7 79.8l.6-8.1M247.7 79.8l6.2 1.4M253.9 81.2l1.2-1.1M246.9 80.2l.8-.4M246.4 62.4l.8-6.5M255.1 54.7l-.5-.4M254.6 54.3l-7.4 1.6M278.1 53.5l-.9-6.5M287.5 47.2l-8-2.6M279.5 44.6l-2.3 2.4M285.1 37.2l-5.6 2.7M285.1 37.2l1-4.6M279.5 39.9l-1.4-1.1M278.1 38.8l-1.2-7.7M277.8 30.6l-.9 .5M277.8 30.6l8.1 1.6M286.1 32.6l-.2-.4M279.5 44.6l0-4.7M289.1 41l-4-3.8M295 33.3l-8.9-.7M294.1 24.8l-7.2 .9M286.9 25.7l-1 6.5M285.5 71.4l-.1-6.9M285.5 71.4l8.2 .5M285.4 64.5l7.1 .2M293.7 71.9l-1.2-7.2M284.9 63.9l.5 .6M284.9 72.1l.6-.7M293.7 72l0-.1M287.7 79.8l4.7 .1M294.7 62.4l-2.2 2.3M301.8 69.4l-.2-2.6M301.8 69.4l-1.8 2.2M295.1 9.1l-3.3-2.7M295.1 9.1l5.1-2M291.8 6.4l1.1-6.4M300.2 7.1l.6-7.1M303.1 9.4l-2.9-2.3M294.7 14.4l.4-5.3M260.2 197l-1.8-5.6M258.4 191.4l4.6-3.2M263.6 198.5l-3.4-1.5M267.7 196.3l.6-4M268.3 192.3l-5.3-4.1M260.8 180.9l-6.3 1.6M254.5 182.5l-.9 7.5M260.8 180.9l2.6 2.4M253.6 190l.1 .1M258.4 191.4l-4.7-1.3M263.4 183.3l-.4 4.9M264.9 173.2l-.6-7M264.9 173.2l-3.8 2.6M261.1 175.8l-4.4-3.1M256.7 172.7l1.1-5.3M257.8 167.4l6.2-1.4M264 166l.3 .2M271.2 175l-1.5 6.9M271.2 175l-6.3-1.8M269.7 181.9l-6.3 1.4M260.8 180.9l.3-5.1M253.1 173.6l-1.7 6.6M253.1 173.6l3.6-.9M251.4 180.2l3.1 2.3M249.3 170.8l.2-4M253.1 173.6l-3.8-2.8M255.4 165l2.4 2.4M261.7 158.3l2.3 7.7M263.5 151l4.8-2.4M263.5 151l-3.9-8.5M259.6 142.5l5.4-1.7M265 140.8l4.4 4.8M269.4 145.6l-1.1 3M264.3 166.2l5-1.2M263.3 156.3l7.9 2.5M271.2 158.8l-1.9 6.2M272.8 174l-1.6 1M272.8 174l-.2-6M272.6 168l-3.3-3M292.6 87.5l-4.4 1.7M293.3 96.5l-4.9-2.1M288.4 94.4l-.2-5.2M284.9 81.9l0 5.4M284.9 87.3l3.3 1.9M278.8 79.7l-2.7 6.3M269.4 79.5l2.7 6.9M276.1 86l-4 .4M284.9 87.3l-4.8 2.5M276.1 86l4 3.8M288.4 94.4l-4.1 2.8M284.3 97.2l-4.6-5.1M280.1 89.8l-.4 2.3M284 99.3l-3.5 2.7M284 99.3l6 4.4M280.5 102l1.3 6.3M290 103.7l-5.4 6.3M281.8 108.3l2.8 1.7M279.7 92.1l-6 4.1M276.3 101l-2.6-4.8M276.3 101l4.2 1M284.3 97.2l-.3 2.1M291.7 103.6l-1.7 .1M272.5 106.2l3.8-5.2M272.5 106.2l.9 4.1M281.8 108.3l-7.4 2.5M273.4 110.3l1 .5M306.6 49.1l3.5-2.9M306.6 49.1l1.8 5M310.1 46.2l6.9 .8M308.4 54.1l3.9 1.3M312.3 55.4l4.7-1.5M304.5 48.5l2.1 .6M304.3 38.6l4.6-.2M309 38.5l-.1-.1M309 38.5l1.1 7.7M304.1 58.9l4.3-4.8M317 39.5l-8-1M311.1 63.7l.7-.4M311.8 63.3l.5-7.9M304.9 61.7l6.2 2M311.8 63.3l5.2 .7M270 214l-.1-6.3M269.9 207.7l-.2-.3M264.5 216.2l-4.1-3.3M263.5 205.8l-1.6 1M261.9 206.8l-1.5 6.1M256 221.7l-.5-7.1M263.5 222.5l-7.5-.8M260.4 212.9l-4.9 1.7M244.4 173.3l-3.8-1.1M244.4 173.3l2.5 7.4M240.6 172.2l-2.7 2.4M237.9 174.6l.1 7.2M238 181.8l8-.2M246 181.6l.9-.9M239.9 167.7l.7 4.5M249.3 170.8l-4.9 2.5M251.4 180.2l-4.5 .5M231.2 166.6l-.7 6.5M230.5 173.1l7.4 1.5M246.4 189.4l7.2 .6M246.4 189.4l-.4-7.8M135.6 183.6l.1 6.1M135.7 189.7l-1.5 1.9M133.7 182.1l-5.1 .6M133.7 182.1l1.9 1.5M128.6 182.7l-2.1 7M126.5 189.7l7.7 1.9M203.9 182.3l3.2 1.7M203.9 182.3l-.1-6.1M212.6 176.3l.1 4.3M203.8 176.2l5.6-1.8M212.7 180.6l-5.6 3.4M193.2 298.5l-1.8 1.9M193.2 298.5l6.6 2.4M199.8 300.9l-.6 6.6M191.3 308l.1-7.6M191.3 308l.6 .5M191.9 308.5l7.3-1M298.5 285.6l-3.9-7.9M304.5 280l-2.6-3.8M294.6 277.7l7.3-1.5M309.4 271.4l-6.6 .4M301.9 276.2l.9-4.4M309.3 253.3l7.7 4.1M309.3 253.3l-2.2 .8M309 263.5l-2-.9M307 262.6l.1-8.5M276.9 241.1l0 .3M285.2 246.9l2.4-9.3M285.2 246.9l-5.5-1.3M276.9 241.1l4.3-4M287.6 237.6l-6.4-.5M311.5 175.5l5.5 .3M311.4 183.4l5.6 .5M308.9 179.8l2.5 3.6M303 172.5l-2.2-4.5M299.5 167.2l1.3 .8M296.6 167.3l-3.3 5.2M296.6 167.3l2.9-.1M301.5 176.2l-6.1-.1M293.3 172.5l2.1 3.6M285.9 197.1l1.2 7.8M285.6 196.7l.3 .4M277.4 198.6l1.8 7.9M277.6 198.2l-.2 .4M285.6 196.7l-8 1.5M287.1 204.9l-7.9 1.6M269.9 207.7l8.9-.6M272.9 216.3l6.8-3.4M279.7 212.9l-.9-5.8M277.4 198.6l-5.6 .9M278.8 207.1l.4-.6M303.6 180.2l-.4 .8M303.2 181l1.4 7.9M311.4 183.4l-3.4 6.2M304.6 188.9l3.4 .7M317 189.7l-8 1.1M309 190.8l-1-1.2M17.5 308.1l.2 8.9M25.6 309.5l-1.1 7.5M8.9 309.1l.4 7.9M103.8 285.8l.3 7.6M110.6 293.6l-6.5-.2M110.6 293.6l1.4-7.3M103.8 285.8l1.6-1.4M112 286.3l-6.6-1.9M61.6 240.5l4.4-2.8M66 237.7l2.4 .8M70.8 246.1l-6.2 1.5M70.8 246.1l.1-.1M61.8 245.2l2.8 2.4M61.8 245.2l-.2-4.7M68.4 238.5l2.5 7.5M75.7 262.5l-5-2M75.7 262.5l2.8-1.3M78.5 261.2l0-7.1M78.5 254.1l-6.2-1.2M70.7 260.5l-1-4.8M69.7 255.7l2.6-2.8M70.9 246l5.5-1.6M81.3 248.2l-4.9-3.8M70.8 246.1l1.5 6.8M80.7 252.2l-2.2 1.9M63.9 254.7l-2.3 7.2M66.3 264.1l-4.7-2.2M66.3 264.1l4.4-3.6M63.9 254.7l5.8 1M64.6 247.6l-1.5 6.1M63.9 254.7l-.8-1M63.1 271.9l4.4-2.5M66.3 264.1l1.2 5.3M57.7 269.2l-.5-1M61.6 261.9l-2.7 .8M57.2 268.2l1.7-5.5M48.3 268.9l.9-1.2M57.2 268.2l-8-.5M39.7 262.8l.7-.9M40.4 261.9l8-.4M49.2 267.7l-.8-6.2M61.8 245.2l-6.4 2.8M63.1 253.7l-7.1-1M56 252.7l-.6-4.7M57 238.4l4.6 2.1M57 238.4l-3.9 7.4M53.1 245.8l2.3 2.2M112.3 245.9l1 7.2M112.3 245.9l5.8-1.4M118.1 244.5l2.8 3M120.9 247.5l-1.7 5.1M113.3 253.1l4.3 .5M117.6 253.6l1.6-1M112.5 253.7l.8-.6M109.9 244l2.4 1.9M119.8 238.2l-6.6-1.4M110 240.7l3.2-3.9M119.8 238.2l-1.7 6.3M126.2 254.8l2.4-2M127.3 246.4l1.3 6.4M127.3 246.4l-6.4 1.1M126.2 254.8l-7-2.2M78.5 261.2l3.8 1.6M87.8 255.9l.2 3.3M88 259.2l-5.7 3.6M97.4 260.3l-5.9 1.5M88 259.2l3.5 2.6M182.7 309.1l2 7.9M182.7 309.1l-6.6 .2M176.1 309.3l-.5 7.7M88.9 293.8l.9 5.4M81.2 294.1l-.4 4.7M80.8 298.8l5.9 2.8M86.7 301.6l3.1-2.4M95.2 300.8l-5.4-1.6M95 308.2l-.3 .3M94.7 308.5l-4.9 .5M95.2 300.8l-.2 7.4M86.7 301.6l-.3 5.4M86.4 307l3.4 2M63.6 230.2l2.4 7.5M63.6 230.2l-5.2 1.5M57 238.4l-.3-.7M58.4 231.7l-1.7 6M17.6 270.1l1.4-8.8M12.1 263l5.8-2.4M19 261.3l-1.1-.7M25.2 268.7l-2.5-7.1M19 261.3l3.7 .3M32.3 262.4l-.7-1M31.6 261.4l-6.6-1.4M22.7 261.6l2.3-1.6M25 260l.6-6.5M31.6 261.4l1.9-6.8M33.5 254.6l-1.9-1.7M31.6 252.9l-6 .6M31.6 252.9l.6-7.9M25.6 253.5l-1.5-1.5M24.1 252l.2-6.9M24.3 245.1l7.9-.1M26.4 229.3l6.7-.9M26.4 229.3l-.4 6.7M32.8 236.9l-.2 .2M32.8 236.9l.6-8M33.4 228.9l-.3-.5M26 236l6.6 1.1M24.5 292.9l7.3-1.6M24.5 292.9l-2.1-7.1M24.3 284.3l-1.9 1.5M24.3 284.3l7.6 2.4M31.9 286.7l-.1 4.6M33.3 293l-1.5-1.7M24.4 293.1l.1-.2M17.6 285.3l4.8 .5M25.8 277.9l-1.5 6.4M34.2 283.8l-2.3 2.9M66 284.5l5.1 2.4M71.1 286.9l4.4-2M75.5 284.9l-1.4-5.9M66.9 279.9l4.4-2.4M74.1 279l-2.8-1.5M67.5 269.4l3.3 1.4M71.3 277.5l-.5-6.7M75.7 262.5l-1.6 6.8M74.1 269.3l-3.3 1.5M77.5 285.9l-2-1M78.3 292.1l-6.1 2.1M71.1 286.9l-.3 6.5M70.8 293.4l1.4 .8M97.8 293.7l5.8 .1M97.8 293.7l-2.5 7M103.6 293.8l.2 7.7M95.3 300.7l8.5 .8M103.8 285.8l-6-.8M95.1 290.7l2.7 3M104.1 293.4l-.5 .4M97.8 285l-2.7 2.5M95.2 300.8l.1-.1M23.8 103.6l.5 .3M23.8 103.6l-.1-7.9M24.3 103.9l7.4-1.2M23.7 95.7l7.8 1.1M31.7 102.7l-.2-5.9M18.4 110.3l.5-5.3M18.9 105l4.9-1.4M26.8 111.5l-2.5-7.6M33.3 104.3l-1.6-1.6M39.3 96.2l-5.3-1.9M40.5 101.6l-1.2-5.4M34 94.3l-2.5 2.5M39.3 126.9l.3-.2M37.8 116.3l3.8 3.1M41.6 119.4l-2 7.3M42.6 93.4l-3.3 2.8M42.6 93.4l6.2 3.2M41 101.9l6.6-.6M47.6 101.3l1.2-4.7M41.6 119.4l6.3-.5M46.9 127.5l1.1-.9M48 126.6l0-7.6M39.6 126.7l7.3 .8M48 119l-.1-.1M105.1 56.3l-.9-6.6M105.1 56.3l-2.2 2M102.9 58.3l-5.1-1.4M104.2 49.7l-8.2 .7M97.8 56.9l-2.2-6.2M96 50.4l-.4 .3M111.4 57l-6.3-.7M112.6 61l-1.2-4M103.4 63.6l-.5-5.3M93.6 61.7l4.2-4.8M103.1 42.2l2.2 6.1M105.3 48.3l-1.1 1.4M96.9 41.4l6.2 .8M96.9 41.4l-.9 9M94.7 50.8l.9-.1M96.9 41.4l0 0M96.9 41.4l-6.8-.6M63.4 7.3l-.5-7.3M72.5 7.6l-.1-7.6M71.7 8.4l.8-.8M54.4 7.6l3.9 2.5M54.4 7.6l1.5-7.6M22.7 6.5l-4.1 3.3M22.7 6.5l-2.1-6.5M13.8 7.2l2.3-7.2M13.8 7.2l4.8 2.6M25.6 7.5l-2.9-1M31.4 3.7l-5.8 3.8M31.4 3.7l.4-3.7M9.1 8.8l4.7-1.6M15.7 16.7l-5.5-1.8M15.7 16.7l3.1-2.4M18.8 14.3l-.2-4.5M47.3 0l.9 8M54.4 7.6l-4.9 1.4M48.2 8l1.3 1M7.2 48.6l-7.2-2.3M7.2 48.6l-.7 6.9M6.5 55.5l-6.5 2.4M14.6 48.4l-4.8-1.3M9.8 47.1l-2.6 1.5M6.5 55.5l4.4 2.5M14.6 48.4l.9 6M15.5 54.4l-4.6 3.6M17.9 46.1l.4-4.5M14.6 48.4l3.3-2.3M9.8 47.1l-.6-7M9.2 40.1l5.7-2.1M18.3 41.6l-3.4-3.6M7 31.4l-7-1.3M7 31.4l-.5 7.1M6.5 38.5l-6.5 1.8M9.2 40.1l-2.7-1.6M34 94.3l-.8-4.9M43.1 89l-.5 4.4M43.1 89l-3.5-2.7M33.2 89.4l6.4-3.1M39.7 80.4l-6.3-1.3M39.6 86.3l.1-5.9M30.5 87.3l2.7 2.1M30.5 87.3l.7-6.3M31.2 81l2.2-1.9M65.2 42.7l-.7 4.1M65.2 42.7l7-1.8M64.5 46.8l6.4 3.7M72.2 40.9l1.4 .7M73.6 41.6l2 5.6M75.6 47.2l-4.7 3.3M55.6 39.9l7.6-.1M55.6 39.9l1 8.2M61.8 48.8l-5.2-.7M63.2 39.8l2 2.9M61.8 48.8l2.7-2M64.6 33.6l-1.4 6.2M70.4 33.5l1.8 7.4M70.4 55.4l-5.2 2.5M65.2 57.9l-2.6-1.8M70.4 55.4l.5-4.9M62.6 56.1l-.8-7.3M79.2 37.5l-5.6 4.1M78.1 32.8l1.1 4.7M71.9 32.1l6.2 .7M82.9 39.3l-3.7-1.8M77.5 47.8l-1.9-.6M70.4 55.4l4.2 2.8M62.8 81.1l-.1 4.3M62.8 81.1l2.9-2.4M65.7 78.7l4.8 .9M63.6 86.3l-.9-.9M63.6 86.3l8.5 .1M70.5 79.6l1.7 6.5M72.1 86.4l.1-.3M63.8 93.9l6.3 .7M63.8 93.9l-.2-7.6M72.7 92.2l-2.6 2.4M72.7 92.2l-.6-5.8M73.2 76.8l-2.7 2.8M79.2 83.9l-7 2.2M80.9 93.2l-1.4 1.1M72.7 92.2l6.8 2.1M8 308.3l-8-.1M8.9 299.7l-8.9-.9M10.9 232.4l-3.5-3.3M0 237.3l7.3 1M10.9 232.4l-.1 3.1M7.3 238.3l3.5-2.8M31.5 206.5l-1.5 4.8M23.3 212.2l2 .8M30 211.3l-4.7 1.7M33.4 228.9l7.6 1.6M32.8 236.9l8.4-.6M41.2 236.3l-.2-5.8M55.1 229.4l3.3 2.3M55.1 229.4l-5.1 1.6M56.7 237.7l-7.3-1.4M49.4 236.3l.6-5.3M51 221.5l-3.2 7.1M41.7 223.1l1.3 4.9M49.1 219.2l-7.4 3.9M43 228l4.8 .6M55.5 222.7l-.4 6.7M47.8 228.6l2.2 2.4M23.5 226.7l.4-3.9M23.5 226.7l-5.3 2.9M23.9 222.8l-6.1-3.3M16.7 229.2l-2.5-6.8M16.7 229.2l1.5 .4M14.2 222.4l3.6-2.9M26.7 220.7l-1.4-7.7M26.7 220.7l-2.8 2.1M17.8 215.9l0 3.6M10 222l4.2 .4M10.9 232.4l5.8-3.2M54.6 39.1l1 .8M54.6 39.1l1.4-6.7M63.7 32.5l-4.8-1.5M56 32.4l2.9-1.4M64.3 23l-5.2 1.4M58.9 31l.2-6.6M111.4 57l1.9-3.2M105.3 48.3l6.5-.4M111.8 47.9l1.5 5.9M121.5 55.7l-1.2-1.4M113.3 53.8l7 .5M72.3 24.8l6.1-.4M73.7 16.3l5.5 .5M79.2 16.8l-.8 7.6M94.4 0l.8 8.3M102.4 6.1l-.3-6.1M102.4 6.1l-5.2 2.9M95.2 8.3l2 .7M68.2 221.1l4.8 1.6M68.2 221.1l-4.7 4.4M73 222.7l-.3 7M72.7 229.7l-8.9 .1M63.5 225.5l.3 4.3M76 213.5l-5-1.7M71 211.8l-4.7 4.4M66.3 216.2l1.9 4.9M73.4 222.5l-.4 .2M60.2 214.6l6.1 1.6M60.1 214.6l.1 0M57.9 221.6l5.6 3.9M63.6 230.2l.2-.4M94.5 205.2l3.2-8.4M94.5 205.2l1.7 1.9M102.4 197.7l-4.7-.9M103.9 204.1l-3.6 3.4M103.9 204.1l-1.5-6.4M96.2 207.1l4.1 .4M89.2 221.6l.4-7.3M89.2 221.6l5.5 .8M94.7 222.4l1.8-6M96.5 216.4l-2.7-2.6M89.6 214.3l4.2-.5M86.9 212.6l2.7 1.7M86.7 223.1l-4.1-1.4M86.7 223.1l2.5-1.5M87.6 229.5l.9 .5M86.7 223.1l.9 6.4M96.2 228.1l.3-3.2M96.5 224.9l-1.8-2.5M104.1 222.1l-7.6 2.8M104.1 222.1l-1.5-6.3M102.6 215.8l-6.1 .6M103.5 214.2l-3.2-6.7M103.5 214.2l-.9 1.6M96.2 207.1l-2.4 6.7M90.9 204.7l-4.7 4.1M94.5 205.2l-3.6-.5M119.8 238.2l.6-.3M127.5 245.9l-.2 .5M127.5 245.9l-2.6-7M124.9 238.9l-4.5-1M135.6 183.6l7.3-1.9M142.9 181.7l-.8-6.3M133.7 182.1l.7-6.8M134.4 175.3l.9-.9M142.1 175.4l-6.8-1M128.6 182.7l-2.9-2.8M134.4 175.3l-7.1-.9M125.7 179.9l1.6-5.5M134.7 166.9l.6 7.5M130 167.2l-3.2 6.1M130 167.2l4.7-.3M127.3 174.4l-.5-1.1M135 151l-1.6-6.6M127.7 143.8l5.7 .6M126.7 152.3l.4 .3M126.7 152.3l.2-7.9M135 151l-.6 1M127.1 152.6l7.3-.6M127.2 164.9l-6.2 2.3M127.2 164.9l-.1-5.6M127.1 159.3l-.4-.3M126.7 159l-7.6 .7M119.1 159.7l-.4 5.1M118.7 164.8l2.3 2.4M121.4 171.1l5.4 2.2M121.4 171.1l-.4-3.9M130 167.2l-2.8-2.3M118.8 149.5l2.1 2.4M118.8 149.5l-5.7 2.2M120.9 151.9l-2.1 7.4M113.1 151.7l.5 5.7M118.8 159.3l-5.2-1.9M119.4 145.1l-.6 4.4M126.7 152.3l-5.8-.4M112.6 142l-.3 .1M112.3 142.1l-2.6 7.3M109.7 149.4l3.4 2.3M119.1 159.7l-.3-.4M127.1 152.6l-.4 6.4M109.7 149.4l-3.1 .7M106.6 150.1l-1.8 6.7M109.6 159.8l4-2.4M104.8 156.8l4.8 3M109.5 166.1l.1-6.3M112 167.1l-2.5-1M112 167.1l6.7-2.3M128 126.9l.3 .4M127.5 134.9l.1-.2M128.3 127.3l-.7 7.4M127.6 134.7l7.2 1.2M133.4 144.4l2.3-2.3M135.7 142.1l-.9-6.2M144.1 127.6l1.9-.8M148.6 128l-2.6-1.2M149.7 133.2l-5.9 3.3M144.1 127.6l-3.8 6.1M140.3 133.7l3.5 2.8M135.5 127.6l1.8 5.9M137.1 125.3l-1.6 2.3M144.1 127.6l-7-2.3M140.3 133.7l-3-.2M128.3 127.3l7.2 .3M137.3 133.5l-2.5 2.4M149.4 143.2l1.2 5.5M149.4 143.2l-5.4-1.3M144 141.9l-1.6 1.2M142.4 143.1l-.4 6.4M150.6 148.7l-6 3.4M144.6 152.1l-2.6-2.6M152.4 140.7l-3 2.5M157.7 149.8l1.8-6.4M154.7 151l-4.1-2.3M154.7 151l3-1.2M143.8 136.5l.2 5.4M135.7 142.1l6.7 1M135 151l7-1.5M153.8 119.6l-1.1-1.2M146 126.8l-1.5-6.8M144.5 120l8.2-1.6M152.9 111.2l-.9 1.5M152 112.7l.7 5.7M172.3 86.5l1.4-6.7M167.6 77.8l6.1 2M172.3 86.5l-4.9 1.5M167.6 77.8l-3.6 2.9M167.4 88l-3.4-7.3M166.5 71.2l1.1 6.6M159.5 79.9l.4 .5M164 80.7l-4.1-.3M135 78.2l8.7-1.1M135 78.2l-.1 5.8M134.9 84l3.2 2.9M144.5 78.5l-.8-1.4M144.5 78.5l-1.9 7.1M138.1 86.9l4.5-1.3M134.6 77.7l.4 .5M144.1 73.4l-.4 3.7M127.9 86.1l7-2.1M137.3 91.3l.8-4.4M153.5 77.5l-3 2.4M150.5 79.9l-6-1.4M151.6 86.1l-1.1-6.2M145.9 87.8l-3.3-2.2M151.6 86.1l-5.7 1.7M145.9 87.8l.2 7.2M17.5 183.7l5.7-1.8M26.4 190.2l-1.1-6.8M23.2 181.9l2.1 1.5M40.7 180.2l1.6 2M40.7 180.2l-7.2 .2M42.3 182.2l-1.4 6.6M33.5 180.4l-.2 .4M33.3 180.8l1.3 8.9M40.9 188.8l-4.3 1.4M34.6 189.7l2 .5M32.1 175.2l-8.8 .1M32.1 175.2l1.4 5.2M25.3 183.4l8-2.6M23.3 175.3l-.1 6.6M32.5 190.7l2.1-1M33 200.3l6-1.5M39 198.8l-2.4-8.6M22.7 160.1l5-2.6M17.9 155.6l4.8 4.5M23.5 150.5l3 1.4M26.5 151.9l1.2 5.6M49.1 182.4l-6.8-.2M49.7 182.9l-.6-.5M40.9 188.8l4.5 2.6M49.7 182.9l.4 4.8M50.1 187.7l-4.7 3.7M49.1 182.4l-.4-8.2M40.7 180.2l1.9-6.3M48.7 174.2l-6.1-.3M32.1 175.2l.8-1.9M32.9 173.3l7.6-2.3M42.6 173.9l-2.1-2.9M32.9 173.3l-2.8-6.4M30.1 166.9l1.8-2.8M38.7 164.9l-6.8-.8M38.7 164.9l2.2 2.7M40.5 171l.4-3.4M73.2 202.5l-4.1 3.9M73.2 202.5l-.5-4.9M72.7 197.6l-8.5-.4M64.2 197.2l-.1 7.9M69.1 206.4l-4.9-1.2M64.2 205.2l-.1-.1M71 211.8l-1.9-5.4M80.1 205.1l.3 .8M80.1 205.1l-6.9-2.6M60.2 214.6l4-9.4M97.3 196.3l-.5-7.7M97.3 196.3l-8.3 .1M96.7 188.5l-8.7 1.4M96.8 188.6l-.1-.1M88 189.9l1 6.5M96.2 182.6l-.4-.4M96.2 182.6l.5 5.9M87.7 182.7l-.4 6.6M88 189.9l-.7-.6M90.9 204.7l-3.2-6.3M80.1 205.1l2.9-5.9M83 199.2l4.7-.8M97.7 196.8l-.4-.5M87.7 198.4l1.3-2M101.4 165.6l-3 1.2M101.4 165.6l5.6 1.7M98.4 166.8l.1 6.9M107 167.3l-1.4 7.1M98.5 173.7l5.4 1.8M103.9 175.5l1.7-1.1M109.5 166.1l-2.5 1.2M102.3 157.6l2.5-.8M102.3 157.6l-.9 8M90 168.1l6.9-2M95.3 175.9l3.2-2.2M96.9 166.1l1.5 .7M103.7 180.9l.2-5.4M103.7 180.9l-7.5 1.7M26.7 142l4.7 2.7M34.8 135.8l.7 5.2M35.5 141l-4.1 3.7M26.5 151.9l5.4-3.5M31.4 144.7l.5 3.7M35.5 141l5.2 2.2M38.9 133.7l4.9 2.2M40.7 143.2l3.1-7.3M46.9 127.5l-.4 7.9M46.5 135.4l-2.7 .5M43.1 153.4l-.6 3.9M43.1 153.4l-4.6-4M34.9 156.3l.1-6M34.9 156.3l5.6 2M40.5 158.3l2-1M38.5 149.4l-3.5 .9M31.9 148.4l3.1 1.9M27.7 157.5l3.2 1.7M30.9 159.2l4-2.9M31.9 164.1l-1-4.9M38.7 164.9l1.8-6.6M47.2 160l-4.7-2.7M47.2 160l-.2 5.2M47 165.2l-6.1 2.4M41.2 144.2l-.5-1M41.2 144.2l-2.7 5.2M153 47.6l-1.2-1.6M142.7 48.9l1.7-2.8M151.8 46l-7.4 .1M136.9 39.8l5.7-.1M136.9 39.8l-1.3 8.3M144.4 46.1l-1.8-6.4M110.6 0l.4 5.8M102.4 6.1l3.4 2.2M111 5.8l-5.2 2.5M134.7 17.9l2.3-2.9M128.2 17.3l-1.3-2.5M128.6 10.1l-1.7 4.7M128.6 10.1l6.3-1.4M137 15l-2.1-6.3M142.7 23.2l-5 1.6M142.7 23.2l.7-7.4M137 15l6.4 .8M174.4 7.2l-6.2 1.6M175.4 16.4l-.6 .4M174.8 16.8l-8.2-2M166.6 14.8l-.1-.1M166.5 14.7l1.7-5.9M166.1 0l-.7 5.5M165.4 5.5l2.8 3.3M207.5 48.5l2-1.3M207.5 48.5l-6.1-1.3M209.5 47.2l-1.3-6.7M201.4 47.2l-.6-7.7M208.2 40.5l-2.7-1.6M205.5 38.9l-4.7 .6M206.6 55.7l.9-7.2M210.9 47.4l-1.4-.2M198.4 49.5l3-2.3M213.3 37.9l-5.1 2.6M199.7 38.8l1.1 .7M207.9 31l-2.4 7.9M238.8 55l-1.4-.8M238.8 55l6-1.8M237.4 54.2l-.6-6.4M245.1 49.8l-.3 3.4M245.1 49.8l-4.7-4.5M240.4 45.3l-3.6 2.5M239.8 62.6l-1-7.6M231.1 55.9l6.3-1.7M247.2 55.9l-2.4-2.7M231.7 46.6l5.1 1.2M237.4 37.9l-6.9 2.9M241 41.2l-.6 4.1M168.8 121.1l6.9-.2M172.4 112l4.9 6.4M177.3 118.4l-1.6 2.5M182.7 110.5l-1.1 6.4M177.3 118.4l4.3-1.5M173.8 129.6l3.4-3.3M175.7 120.9l1.5 5.4M190.5 111.1l.1 7.4M190.6 118.5l-5.9 .8M190.5 111.1l-7.2-1.1M181.6 116.9l3.1 2.4M189.1 127.3l-5-.4M189.1 127.3l2.9 6.7M182.9 134.1l8.2 1.3M182.9 134.1l-.1-6.3M182.8 127.8l1.3-.9M192 134l-.9 1.4M177.2 126.3l5.6 1.5M182.2 134.9l.7-.8M184.7 119.3l-.6 7.6M199.5 94.9l-1.2 7.6M190.7 101.4l2 1.8M192.7 103.2l5.6-.7M190.5 111.1l1.8-1.4M192.7 103.2l-.4 6.5M245.7 94.9l.9 1.4M239.5 94.9l-2.2 2.5M240.3 104.8l5.1-2M246.6 96.3l-1.2 6.5M240.3 104.8l-2.9-2.9M237.4 101.9l-.1-4.5M222.7 87.6l-.7 7.1M222.7 87.6l5.7-.6M222 94.7l.3 .3M222.3 95l7.4 .3M228.4 87l2.5 3.2M230.9 90.2l-1.1 5M229.8 95.2l-.1 .1M221.1 86.1l1.6 1.5M230.3 81.5l-1.9 5.5M237 88.9l-6.1 1.3M237.3 97.4l-7.5-2.2M174.5 79.3l7.2 1.9M174.5 79.3l1.6-7.3M176.1 72l6.5 0M182.6 72l1 7.2M183.6 79.2l-1.9 2M182.4 86.9l-.7-5.7M174.8 88.4l-2.5-1.9M173.7 79.8l.8-.5M174.7 70.5l1.4 1.5M184 70.7l-1.4 1.3M190.3 79.5l-6.7-.3M196.9 163.4l6.1 3.2M196.9 163.4l-4.1 5.9M203 166.6l-2.7 7M192.8 169.3l.8 2.3M193.6 171.6l4.3 2.4M200.3 173.6l-2.4 .4M205.8 165.6l3.2 2.2M203.8 176.2l-3.5-2.6M205.8 165.6l-2.8 1M188 167.2l4.8 2.1M189.6 175.6l4-4M195.1 181.6l-3.3 .6M195.1 181.6l2.8-7.6M199.6 184.4l4.3-2.1M199.6 184.4l-4.5-2.8M237.2 148.7l-4.7 .2M232.1 157.8l-1.7-5.9M232.5 148.9l-2.1 3M222.7 158.3l1.9-6.3M230.4 151.9l-5.8 .1M162.1 152.7l6.5-3.1M162.1 152.7l.5 5.8M170.7 158.2l-4.5 1.6M170.7 158.2l-1.1-8.1M169.6 150.1l-1-.5M162.6 158.5l3.6 1.3M166.8 144.8l1.8 4.8M157.7 149.8l4.4 2.9M160.2 160.1l-7.1-2.7M154.7 151l-1.6 6.4M160.2 160.1l2.4-1.6M173.8 149.1l-4.2 1M172.7 159.1l-2-.9M240.3 16.1l-.2 .1M239.7 24.3l-1.4-1.9M240.1 16.2l-1.8 6.2M233.9 7.7l-2 6.8M240.1 16.2l-8.2-1.7M227.8 15.7l1.4 .7M231.9 14.5l-2.7 1.9M231.8 30.2l-.5-7.9M231.8 30.2l-4.3 2.1M227.5 32.3l-1.7-.8M225.8 31.5l-1.7-6.7M224.1 24.8l6-3.6M230.1 21.2l1.2 1.1M238.3 22.4l-7-.1M236.3 31.7l-4.5-1.5M228.6 39.8l-1.1-7.5M220.8 33l5-1.5M218.5 22.9l5.6 1.9M229.2 16.4l.9 4.8M291.8 6.4l-5.3 1.5M285 0l.8 7.4M285.8 7.4l.7 .5M278.1 6.2l.6-6.2M279.5 7.4l6.3 0M279.5 7.4l-1.4-1.2M270.1 38.7l.2 .2M270.1 38.7l-7.5 .9M270.3 38.9l.2 7.1M262.6 39.6l0 6.8M262.6 46.4l7.4 0M270 46.4l.5-.4M269.7 32.5l.4 6.2M272.2 30.3l4.7 .8M278.1 38.8l-7.8 .1M261.5 38.4l1.1 1.2M262.8 31.6l-1.3 6.8M277.2 47l-6.7-1M262.5 46.5l.1-.1M262.2 52.9l.3-6.4M269.4 55.4l.6-9M309.9 23.1l-1 6M309.9 23.1l7.1-1.1M310.8 31.2l6.2-.1M310.8 31.2l-1.9-2.1M308.6 21.6l1.3 1.5M303 29.7l5.9-.6M308.9 38.4l1.9-7.2M287.5 141.1l-.2-2.6M293.7 143.3l-6.2-2.2M295.9 141.1l-2.2 2.2M294.5 134.4l-1-.5M294.5 134.4l1.4 6.7M293.5 133.9l-6.2 4.6M293.5 133.9l-1.8-4.6M287.3 138.5l-2.6-3.3M284.7 135.2l1.6-6M291.7 129.3l-5.4-.1M310.7 135.3l-1.4 6.4M310.7 135.3l-3.7-3.2M302.1 133.7l-.2 6.8M302.1 133.7l4.9-1.6M301.9 140.5l2.3 2.3M304.2 142.8l3.2 .2M309.3 141.7l-1.9 1.3M317 143.7l-7.7-2M317 133.7l-6.3 1.6M308 126.9l2.2-1.3M308 126.9l-1 5.2M300.9 133l-6.4 1.4M295.9 141.1l6-.6M300.9 133l1.2 .7M299.8 150.3l4.4-7.5M302.3 152.6l-2.5-2.3M309.9 151.3l-.8 1.1M302.3 152.6l6.8-.2M309.9 151.3l-2.5-8.3M309.9 151.3l7.1-1.6M253.7 190.1l-2.1 7.8M260.2 197l-5.5 3.5M254.7 200.5l-3.1-2.6M261.9 206.8l-7-2.4M254.7 200.5l.2 3.9M247.4 198.3l4.2-.4M246.4 189.4l-1.7 1.4M247.4 198.3l-2.6-2.3M244.7 190.8l.1 5.2M247.4 198.3l-1.5 7M241 205l4.9 .3M241 205l-2.3-6.1M244.8 196l-6.1 2.9M241 205l-2.8 2.8M231.9 205.9l-.1-4.6M238.2 207.8l-6.3-1.9M231.8 201.3l6-2.7M238.7 198.9l-.9-.3M277.6 198.2l-1.2-6.5M268.3 192.3l3.3-2.1M276.4 191.7l-4.8-1.5M269.7 181.9l2 2M271.6 190.2l.1-6.3M278.3 135.5l6.4-.3M278.3 135.5l-1.1 4.5M287.5 141.1l-2.7 2.7M284.8 143.8l-7.6-3.8M267.8 134.7l-.9 .3M265 140.8l1.9-5.8M269.4 145.6l4.7-2.5M267.8 134.7l6.8 7.4M274.6 142.1l-.5 1M302.3 152.6l-.5 6.9M301.7 159.6l.1-.1M301.7 159.6l-7.4-1.1M299.8 150.3l-2.3 0M294.3 158.5l3.2-8.2M301.7 159.6l-2.2 7.6M292.6 163l.5-3.8M296.6 167.3l-4-4.3M294.3 158.5l-1.2 .7M293.7 143.3l1 5.1M294.7 148.4l2.8 1.9M293.3 172.5l-4.9-.4M292.6 163l-6.2 3.1M286.4 166.1l2 6M256.5 93.5l5.5 1.2M256.5 93.5l-1.8-5.2M255 87.7l8.2-1.6M255 87.7l-.3 .6M262 94.7l2.6-6.8M263.2 86.1l1.4 1.8M246.6 96.3l7 1.1M253.6 97.4l2.9-3.9M247 89.7l7.7-1.4M263.6 80.9l-.4 5.2M253.9 81.2l1.1 6.5M272.1 86.4l-2 2.3M270.1 88.7l-5.5-.8M245.4 102.8l3.8 2.7M249.2 105.5l5.9-2.2M253.6 97.4l1.6 5.5M255.1 103.3l.1-.4M273.3 96l-2.1-2.2M273.3 96l-7.1 6.6M271.2 93.8l-8.2 2.2M263 96l.5 5.4M263.5 101.4l1.4 1.3M266.2 102.6l-1.3 .1M270.1 88.7l1.1 5.1M273.7 96.2l-.4-.2M272.5 106.2l-6.3-3.6M262 94.7l1 1.3M255.2 102.9l8.3-1.5M273.4 110.3l-3.9 2M264.9 102.7l-1.7 7.6M269.5 112.3l-6.3-2M269.5 112.3l-1 6.3M268.5 118.6l2.5 2.1M274.4 110.8l2.9 6.7M277.3 117.5l-6.3 3.2M245.5 143l1.5-1.6M253.3 150.5l1.1-7M247 141.4l7.4 2.1M263.1 151.6l.4-.6M259.6 142.5l-2.8-.9M256.8 141.6l-2.4 1.9M310.2 157.7l6.8 1.9M310.2 157.7l-2.8 3.1M307.4 160.8l.8 4M310.8 167.3l6.2-1.5M310.8 167.3l-2.6-2.5M309.1 152.4l1.1 5.3M301.8 159.5l5.6 1.3M300.8 168l7.4-3.2M309.3 171.8l1.5-4.5M253.3 213.3l.5-7.8M253.3 213.3l-5 .7M246.8 213l-.6-7.4M246.8 213l1.5 1M246.2 205.6l7.6-.1M255.5 214.6l-2.2-1.3M254.9 204.4l-1.1 1.1M245.9 205.3l.3 .3M221.6 167.9l-4.9 .2M221.6 167.9l2.3 5.2M215.4 174.8l6 1.6M221.4 176.4l2.5-3.3M223.2 165.5l-1.6 2.4M230.5 173.1l-.4 .4M223.9 173.1l6.2 .4M230.8 191.8l5 .6M230.8 191.8l-1.1-1.2M229.7 190.6l1.4-7.5M235.8 192.4l3.3-3.1M239.1 189.3l-1.8-6.7M237.3 182.6l-6.2 .5M229.2 199l2.6 2.3M229.2 199l1.6-7.2M237.8 198.6l-2-6.2M244.7 190.8l-5.6-1.5M238 181.8l-.7 .8M229.6 181.8l.5-8.3M229.6 181.8l1.5 1.3M172.7 259.3l4 3.4M172.7 259.3l-4.8 1.8M167.9 261.1l1.7 6.2M169.6 267.3l6.7 .8M176.3 268.1l.4-5.4M159.3 284.6l1.1-4.1M160.4 280.5l7.1-1.6M167.5 278.9l2.2 5.4M160.7 286.5l6 1.3M159.3 284.6l1.4 1.9M166.7 287.8l3-3.5M176.3 268.1l.2 .1M168.9 276.2l4.2-.3M166.5 271.3l2.4 4.9M166.5 271.3l3.1-4M173.1 275.9l3.4-7.7M144.3 190.8l5 1M144.3 190.8l-.4-.7M143.9 190.1l.5-7.3M149.3 191.8l3.5-3.3M152.8 188.5l-1.7-6.3M144.4 182.8l6.4-.8M150.8 182l.3 .2M135.7 189.7l8.2 .4M142.9 181.7l1.5 1.1M156.8 189.7l4.1-2.6M161.2 184.6l-.3 2.5M156.9 180.9l4.3 3.7M156.9 180.9l-5.8 1.3M156.8 189.7l-4-1.2M121.4 171.1l-3.5 3.5M125.7 179.9l-4.2 .6M121.5 180.5l-3.6-5.9M105.6 174.4l6.9 2.2M112 167.1l2.7 7.5M112.5 176.6l2.2-2M114.7 174.6l3.2 0M181.9 190.7l-8.1 .3M181.9 190.7l.3 6.4M182.2 197.1l-5.7 .3M176.5 197.4l-2.8-2.6M173.8 191l-.1 3.8M183.4 188.7l-1.5 2M190.1 189.9l-.3-.4M188.8 198.1l-5 .3M190.1 189.9l-1.3 8.2M183.8 198.4l-1.6-1.3M215 189.8l1.4-6.2M215 189.8l6.3 2.8M221.3 192.6l2.2-1.9M223.5 190.7l-1-8.6M216.4 183.6l5.9-1.7M222.3 181.9l.2 .2M221.3 195.3l3.2 4.1M229.2 199l-4.7 .4M229.7 190.6l-6.2 .1M221.3 195.3l0-2.7M229.6 181.8l-7.1 .3M221.4 176.4l.9 5.5M212.7 180.6l3.7 3M207.1 184l1.3 5.1M215 189.8l-.4 .2M208.4 189.1l6.2 .9M191.3 308l-7.4-.3M191.9 308.5l-.3 8.5M183.9 307.7l-1.2 1.4M192.6 295l-3-2.8M192.6 295l6.7-4.5M197.7 284.6l1.6 5.9M197.7 284.6l-4.9 .3M189.6 292.2l.3-4.6M192.8 284.9l-2.9 2.7M238.2 207.8l.7 6M246.8 213l-7.5 1.2M239.3 214.2l-.4-.4M229.8 207.9l2.1-2M229.8 207.9l1.3 7.3M238.9 213.8l-7.8 1.4M268 224l4.5 6.5M264.1 223.4l-2.1 7.1M272.5 230.5l-8.8 3.1M262 230.5l1.7 3.1M273.4 219.6l3.3 2.6M272.6 230.5l-.1 0M272.6 230.5l3.8-1.4M276.4 229.1l.3-6.9M276.9 241.1l-3.7-2.8M273.2 238.3l-.6-7.8M281.2 237.1l-2.1-6.9M276.4 229.1l2.7 1.1M283.1 215.4l-3.4-2.5M283.1 215.4l-1.3 5.1M276.7 222.2l5.1-1.7M295 229.6l-3.7-7.1M295 229.6l-6.3 2.8M288.7 232.4l-3.9-4.8M291.3 222.5l-5.7 2.6M285.6 225.1l-.8 2.5M287.6 237.6l0 0M287.6 237.6l1.1-5.2M279.1 230.2l5.7-2.6M281.8 220.5l3.8 4.6M304.6 188.9l-2.4 1.2M302.2 190.1l-6.8-2.9M303.2 181l-7.8 3.4M295.4 184.4l0 2.8M295.4 176.1l-2.3 5M295.4 184.4l-2.3-3.3M310.4 237.3l6.6 .1M310.4 237.3l-.4 7M312 246.1l5-.2M312 246.1l-2-1.8M309.3 253.3l2.7-7.2M307.1 254.1l-4-1.3M302.5 244.7l.6 8.1M302.5 244.7l7.5-.4M287.1 204.9l1.4 1.1M283.1 215.4l3.3-.8M288.5 206l-2.1 8.6M317 197.3l-3.8 .3M317 205.9l-6.4-.8M310.6 205.1l2.6-7.5M309 190.8l.6 4.6M313.2 197.6l-3.6-2.2M72.9 230l7 .5M72.9 230l-.4 5.9M72.5 235.9l5.5 2.8M81.3 231.8l-.3 5.3M81.3 231.8l-1.4-1.3M81 237.1l-3 1.6M72.7 229.7l.2 .3M80.3 223.2l-.4 7.3M68.4 238.5l4.1-2.6M76.4 244.4l1.6-5.7M87.6 229.5l-6.3 2.3M84.4 239l-3.4-1.9M48.5 261.4l7.2-1.2M48.5 261.4l-.8-6.8M47.7 254.6l8.1-1.7M55.7 260.2l.1-7.3M58.9 262.7l-3.2-2.5M48.4 261.5l.1-.1M56 252.7l-.2 .2M40.4 261.9l-1-7.6M47.7 254.6l-1.3-1.3M46.4 253.3l-7 1M33.5 254.6l5.7-.4M39.2 254.2l.2 .1M32.9 244.5l-.7 .5M32.9 244.5l5.9 1.1M39.2 254.2l-.4-8.6M74.1 269.3l6.4 2.8M82.3 262.8l1.5 6M83.8 268.8l-3.3 3.3M74.1 279l6.6-3.1M80.5 272.1l.2 3.8M81.6 284.3l.6-6.8M89.2 284.4l.5-6.4M89.7 278l-7.5-.5M82.2 277.5l-1.5-1.6M111 276.9l-5.4 .9M111 276.9l1.4-7.6M112.4 269.3l-7.6-.4M105.6 277.8l-.1-.1M105.5 277.7l-1.2-8.4M104.8 268.9l-.5 .4M112 286.3l1.8-1.1M113.8 285.2l-.4-6.6M105.4 284.4l.2-6.6M113.4 278.6l-2.4-1.7M119 271.8l0 4.8M119 271.8l-6.6-2.6M112.4 269.2l0 .1M119 276.6l-5.6 2M105.3 261.3l-.5 7.6M113.8 263.4l-2.9-2.8M113.8 263.4l-1.4 5.8M97.9 260.5l.8 8.8M98.7 269.3l5.6 0M153.2 311.3l-5.5-2.6M147.7 308.7l4.4-6.7M157.6 306.7l-.9-2.7M153.2 311.3l4.4-4.6M156.7 304l-4.6-2M145.5 299.3l-.3-4.9M152.8 293l-7.6 1.4M145.5 299.3l6.3 2.1M152.8 293l1.2 1.1M151.8 301.4l2.2-7.3M160 317l1-8.3M167.6 317l.5-6.7M161 308.7l4.4-1M168.1 310.3l-2.7-2.6M176.1 309.3l-.8-.8M168.1 310.3l7.2-1.8M189.6 292.2l-4.9 1.5M193.2 298.5l-.6-3.5M191.4 300.4l-7.8 .2M184.7 293.7l-1.1 6.9M183.9 307.7l-.6-6.9M183.6 300.6l-.3 .2M89.8 309l-2.1 8M86.4 307l-4.6 1.7M81.8 308.7l.3 8.3M94.7 308.5l1.6 8.5M304.7 308.5l-3.8 8.5M309.7 311.1l.1 5.9M309.7 311.1l-2.9-2.6M306.8 308.5l-2.1 0M300.6 305.8l4.1 2.7M317 308.8l-7.3 2.3M310.3 302l-3.5 6.5M64.4 285.5l-.2 7.7M70.8 293.4l-4.9 1M64.2 293.2l1.7 1.2M49.1 317l.6-7.4M54.4 308l-4.7 1.6M57.7 310.1l-.7 6.9M54.4 308l3.3 2.1M112.3 142.1l-7.1-2.1M109.8 132.9l-4.3 2.3M105.5 135.2l-.3 4.8M102.6 147.2l4 2.9M102.6 147.2l.2-5.4M102.8 141.8l2.4-1.8M105.8 125.8l-.8 .2M105.5 135.2l-3.5-2.7M105 126l-3 6.5M103.5 116.7l-5.1 2.7M105 126l-6.8-2M98.4 119.4l-.2 4.6M102 132.5l-4.5 .4M97.5 132.9l-.7-7.6M98.2 124l-1.4 1.3M94.6 159.5l3.5-3.3M94.6 159.5l-5.4-.4M98.1 156.2l-1.7-5.6M96.4 150.6l-7.3 1.4M89.2 159.1l-1.6-2.1M87.6 157l.5-3.9M88.1 153.1l1-1.1M102.3 157.6l-4.2-1.4M96.9 166.1l-2.3-6.6M87.7 166.4l1.5-7.3M102.6 147.2l-5.7 2.5M96.9 149.7l-.5 .9M81.2 149.7l6.9 3.4M81.2 149.7l1-5.7M88.2 143.4l-4.7-.5M82.2 144l1.3-1.1M88.2 143.4l.9 8.6M56.7 93.3l-2.5 2.3M56.7 93.3l6.1 1.4M54.2 95.6l2.6 7.3M62.8 94.7l-.8 5.9M62 100.6l-5.2 2.3M55.6 87.1l7.1-1.7M63.8 93.9l-1 .8M55.6 87.1l1.1 6.2M70.1 94.6l1 7.4M71.1 102l-5 1.5M66.1 103.5l-4.1-2.9M56.8 102.9l-.5 .9M47.6 101.3l2.1 2.7M50.3 95.5l3.9 .1M50.3 95.5l-1.5 1.1M56.3 103.8l-6.6 .2M42 109.9l5.3 1M49.7 104l-2.4 6.9M47.9 118.9l0-7.2M47.3 110.9l.6 .8M47.9 111.7l8.9-.1M48 119l7.9 .5M55.9 119.5l.9-7.9M56.3 103.8l1.8 6.5M58.1 110.3l-1.3 1.3M23.2 48.4l3.7-3M23.2 48.4l1.2 6.6M31.2 52.9l-6.8 2.1M31.2 52.9l.2-5.2M26.9 45.4l4.5 2.3M18.6 31.4l-3 2.2M18.6 31.4l-2.4-7.9M15.6 33.6l-7-3.4M16.2 23.5l-6.6 1.6M9.6 25.1l-1 5.1M7 31.4l1.6-1.2M14.9 38l.7-4.4M16.3 23.2l-.1 .3M16.3 23.2l-.6-6.5M7.8 23.1l1.8 2M18.6 31.4l3.9 .5M18.3 41.6l6.1-2.7M22.5 31.9l1.9 7M17.9 46.1l5.3 2.3M26.9 45.4l-.1-5.3M24.4 38.9l2.4 1.2M15.5 54.4l5.8 2.4M24.4 55l-.3 .5M21.3 56.8l2.8-1.3M42.7 56.1l4.9-.3M49.1 63.8l-1.5-8M42.7 56.1l-1.7 6.2M49.1 63.8l-.3 .3M48.8 64.1l-7.8-1.8M34.5 55.1l-.4 6.2M34.5 55.1l5.1-2.4M34.1 61.3l6.3 1.4M39.6 52.7l3.1 3.4M41 62.3l-.6 .4M32.4 72.8l-5.7-.7M32.4 72.8l1.9-1.9M34.3 70.9l-2.4-8M26.7 72.1l-2.6-4.5M24.1 67.6l5.5-4.8M31.9 62.9l-2.3-.1M23.3 78.4l3.4-6.3M31.2 81l-7.9-2.6M33.4 79.1l-1-6.3M40.4 62.7l-.4 8M40 70.7l-5.7 .2M34.1 61.3l-2.2 1.6M19.8 62l1.5-5.2M19.8 62l3.8 5.5M23.6 67.5l.5 .1M24.1 55.5l5.5 7.3M34.5 55.1l-3.3-2.2M40.2 48l.2 .5M40.2 48l3.2-7.1M40.4 48.5l8.7 .4M49.1 48.9l-.8-8.9M48.3 40l-4.9 .9M39.6 52.7l.8-4.2M35.2 45.5l-3.8 2.2M35.2 45.5l5 2.5M55.6 57l.1-8.3M55.6 57l-7-2.2M48.6 54.8l.6-5.8M55.7 48.7l-6.5 .3M56.1 57.6l-.5-.6M56.1 57.6l6.5-1.5M56.6 48.1l-.9 .6M54.8 63.1l-5.7 .7M56.1 57.6l-1.3 5.5M47.6 55.8l1-1M49.1 48.9l.1 .1M48.5 39.8l-.2 .2M54.6 39.1l-6.1 .7M69.7 70.9l-4.5 1.7M69.7 70.9l-.1-5.7M69.6 65.2l-4.5-2.5M65.2 72.6l-1.4-.7M63.8 71.9l-1.6-6.8M65.1 62.7l-2.9 2.4M72.2 72.2l-2.5-1.3M65.7 78.7l-.5-6.1M74.4 63.2l-4.8 2M65.2 57.9l-.1 4.8M57.6 77.8l-.3-3.9M57.3 73.9l6.5-2M62.8 81.1l-5.2-3.3M56.6 64.9l-1 7.4M56.6 64.9l5.6 .2M57.3 73.9l-1.7-1.6M54.8 63.1l1.8 1.8M57.6 77.8l-3.4 2.9M55.6 87.1l-1.3-.8M54.2 80.7l.1 5.6M50.3 95.5l-1.1-7.9M54.3 86.3l-5.1 1.3M43.1 89l5-1.8M48.1 87.2l1.1 .4M18.2 229.6l2.6 7.3M10.8 235.5l4.6 3.3M15.4 238.8l5.4-1.9M32.6 237.1l.3 7.4M24.3 245.1l-.3-.3M26 236l-2.9 1.8M24 244.8l-.9-7M26.4 229.3l-2.9-2.6M20.8 236.9l2.3 .9M8.5 245.9l.1-.1M8.5 245.9l.4 7.9M8.6 245.8l6-1.1M8.9 253.8l7.4 .2M16.3 246l-1.7-1.3M16.3 246l.2 7.6M16.3 254l.2-.4M0 246l8.5-.1M7.3 238.3l1.3 7.5M7.1 255.4l1.8-1.6M15.4 238.8l-.8 5.9M17.9 260.6l-1.6-6.6M24 244.8l-7.7 1.2M24.1 252l-7.6 1.6M39.3 214.3l-5.2 .9M39.3 214.3l1.1 7.9M34.1 215.2l-2.7 5.9M40.4 222.2l-6.9 1.5M33.5 223.7l-2.1-2.6M39 207.9l1.2 5.5M39 207.9l-6.9-1.9M40.2 213.4l-.9 .9M30 211.3l4.1 3.9M48.9 216.7l-2.8-3.1M40.2 213.4l5.9 .2M41.7 223.1l-1.3-.9M26.7 220.7l4.7 .4M41 230.5l2-2.5M33.1 228.4l.4-4.7M49.5 9l-.3 6.8M58.4 15.4l-3.5 3M49.2 15.8l5.7 2.6M59.1 24.4l-3.8-2.6M54.9 18.4l.4 3.4M104.1 16l-4.3-.5M104.1 16l1 8.4M99.8 15.5l-4.3 3.5M105.1 24.4l-6.4 1.2M98.7 25.6l-3.6-5.1M95.5 19l-.4 1.5M105.8 14.8l0-6.5M97.2 9l2.6 6.5M105.8 14.8l-1.7 1.2M111.8 15.6l-6-.8M112.6 22.6l-.8-7M106.1 25l6.5-2.4M106.1 25l-1-.6M80.2 16.1l4.6 .6M80.2 16.1l-.7-7.4M84.8 16.7l4.6-4.4M81.5 6.8l-2 1.9M81.5 6.8l5.9 1M87.4 7.8l2.3 2.8M89.7 10.6l-.3 1.7M79.2 16.8l1-.7M72.5 7.6l7 1.1M88 23.6l7.1-3.1M95.5 19l-6.1-6.7M88 23.6l-3.2-6.9M80.7 0l.8 6.8M89.4 0l-2 7.8M95.2 8.3l-5.5 2.3M88.2 35l4.1-3.7M88.2 35l-6.9-6.2M92.3 31.3l-4.4-7.5M87.9 23.8l-6.5 3.6M81.3 28.8l.1-1.4M97.8 32.9l-1.3-1.5M97.8 32.9l-.9 8.5M87.5 37.9l.7-2.9M96.5 31.4l-4.2-.1M78.1 32.8l3.2-4M96.5 31.4l2.2-5.8M88 23.6l-.1 .2M78.4 24.4l3 3M105.9 223.3l-1.4 8.4M105.9 223.3l2.1-.2M108 223.1l6 5.7M104.5 231.7l7.3 .6M111.8 232.3l2.2-3.5M104.1 222.1l1.8 1.2M103.9 232.2l.6-.5M113.2 236.8l-1.4-4.5M127.5 245.9l7.2-2.2M134.7 243.7l.2-5.4M124.9 238.9l4.5-3.3M129.4 235.6l5.5 2.7M162.5 168.5l-3 5.9M162.5 168.5l4.4-.5M168.5 168.9l-1.6-.9M168.5 168.9l.9 5.7M159.5 174.4l6 3.1M169.4 174.6l-3.9 2.9M166.2 159.8l.7 8.2M160.2 160.1l-1.2 5M159 165.1l3.5 3.4M174.7 165.8l-6.2 3.1M174.6 176.9l1.5-.9M174.6 176.9l-5.2-2.3M165.3 181.8l-4.1 2.8M158.8 174.6l-1.9 6.3M165.3 181.8l.2-4.3M158.8 174.6l.7-.2M158.8 174.6l-5-2.2M159 165.1l-4.8 1.4M154.2 166.5l-.4 5.9M150.8 182l-.3-8M142.1 175.4l2.9-3.4M145 172l5.5 2M150.5 174l3.3-1.6M127.1 159.3l6.8 .2M134.7 166.9l.5-.5M135.2 166.4l-1.3-6.9M134.4 152l1.4 4.8M135.8 156.8l-1.9 2.7M142.1 111.3l1.2 1.5M142.1 111.3l-7.5 .6M143.3 112.8l.2 6.4M134.6 111.9l.1 7M143.5 119.2l-6.2 1.9M134.7 118.9l2.6 2.2M143.9 105.1l-1.8 6.2M152 112.7l-8.7 .1M133.7 111l.9 .9M144.5 120l-1-.8M128.7 121l6-2.1M137.1 125.3l.2-4.2M167.9 94.9l-.5-.9M167.4 88l0 0M167.4 94l0-6M161 101.7l-1.3-6.8M167.4 94l-7.7 .9M25.8 167.3l-4.1-3.1M25.8 167.3l-2.9 7.4M22.9 174.7l-5-1.4M17.9 173.3l-.2-7.5M17.7 165.8l4-1.6M22.7 160.1l-1 4.1M30.1 166.9l-4.3 .4M23.3 175.3l-.4-.6M16.4 174.1l1.5-.8M15.9 165l1.8 .8M39 198.8l.8 .4M45.4 191.4l.5 3.7M45.9 195.1l-6.1 4.1M39 207.9l2.8-3.9M41.8 204l-2-4.8M50.2 173.1l-.3-5.8M50.2 173.1l5.1 1M57.9 172.6l-2.6 1.5M57.9 172.6l-.1-6.4M49.9 167.3l5.9-2.6M57.8 166.2l-2-1.5M48.7 174.2l1.5-1.1M47 165.2l2.9 2.1M55.8 181l-.5-6.9M49.7 182.9l6.1-1.9M50.8 158.2l-3.6 1.8M55.2 160.1l.6 4.6M50.8 158.2l4.4 1.9M80.9 171.8l-3.8 4M72.9 167.6l-2.5 6.3M70.4 173.9l1 1.4M81.1 168.3l-8.2-.7M77.1 175.8l-5.7-.5M86 180.4l-6.6 1.5M77.1 175.8l2.3 6.1M55.8 181l3.1 1.6M63 174.4l-.6 6.8M63 174.4l-5.1-1.8M58.9 182.6l3.5-1.4M50.1 187.7l5 3M55.1 190.7l3.2-2M58.9 182.6l-.6 6.1M63 174.4l2.6-1.4M57.8 166.2l6.3-1.5M65.6 173l-.9-7.8M64.1 164.7l.6 .5M72.9 167.6l-1.3-2.3M65.6 173l4.8 .9M64.7 165.2l6.9 .1M41.2 144.2l5.1 1.3M43.1 153.4l4.6-3.1M46.3 145.5l1.4 4.8M50.8 158.2l0-6.6M50.8 151.6l-3.1-1.3M161.3 41l-3-2.5M151.8 46l.5-5M152.3 41l6-2.5M119.3 5.5l2.3 1.7M119.3 5.5l-5.7 2.2M121.6 7.2l-1.2 6.9M113.6 7.7l.5 6.1M114.1 13.8l5.1 1.1M119.2 14.9l1.2-.8M128.1 0l-2.7 6.8M119.2 0l.1 5.5M125.4 6.8l-3.8 .4M111 5.8l2.6 1.9M125.4 6.8l3.2 3.3M126.9 14.8l-6.5-.7M111.8 15.6l2.3-1.8M112.6 22.6l2 1.1M114.6 23.7l5.7-1.1M120.3 22.6l-1.1-7.7M125.9 22.2l-5.5 .4M120.4 22.6l-.1 0M134.9 8.6l-2.6-8.6M134.9 8.7l0-.1M166.1 39.2l.8-6.9M158.3 38.5l-.3-5.7M158 32.8l.5-.5M158.5 32.3l8.4 0M152.7 31.7l5.3 1.1M158.5 32.3l1.2-8.5M159.7 23.8l-1.5-1M152.7 31.7l-1.5-6.5M151.2 25.2l7-2.4M175.3 25.3l-1.9-2.2M175.3 25.3l-.4 4.6M173.4 23.1l-7.2 .9M166.2 24l1.4 7.6M174.9 29.9l-2.8 2.2M172.1 32.1l-4.5-.5M182.1 23.9l-6.8 1.4M174.8 16.8l-1.4 6.3M181.1 32.3l-6.2-2.4M166.6 14.8l-1.3 8.5M165.3 23.3l.9 .7M159.7 23.8l5.6-.5M166.9 32.3l.7-.7M174.7 39.1l-2.6-7M166.5 14.7l-6.2-1M165.4 5.5l-6.4 1.6M159 7.1l1.3 6.6M158.2 22.8l-1.5-6.3M160.3 13.7l-3.6 2.8M190.6 118.5l2.2 1.6M189.1 127.3l3.9-3.6M193 123.7l-.2-3.6M192.3 109.7l5.7 2M200.6 104.1l-2.3-1.6M200.6 104.1l1.1 3.9M201.7 108l-3.7 3.7M192.8 120.1l6.3-2.9M198 111.7l1.1 5.5M214.1 93.1l-5.2 1.5M214.1 93.1l2.2 1.9M216.3 95l-1.3 7.4M208.9 94.6l-2 2.8M210 102.4l-2.7-2.8M210 102.4l5 0M206.9 97.4l.4 2.2M214.5 87.3l-.4 5.8M205.3 87.1l3.6 7.5M222 94.7l-5.7 .3M199.7 94.7l7.2 2.7M207.4 109.8l-5.7-1.8M207.4 109.8l2.6-7.4M200.6 104.1l6.7-4.5M215 102.4l.5 .5M222.3 95l.2 7.9M215.5 102.9l7 0M182.7 143.1l7.8-.9M191.1 135.4l.6 5.7M190.5 142.2l1.2-1.1M186.1 152l4.7-.3M190.5 142.2l.3 9.5M254.2 36.9l2.3 1.7M254.2 36.9l-5.7 4.2M256.5 38.6l-.9 7.4M248.5 41.1l2.2 5.2M250.7 46.3l2.6 1M253.3 47.3l2.3-1.3M253.3 31.7l.9 5.2M261.5 38.4l-5 .2M245.5 39.8l3 1.3M262.5 46.5l-6.9-.5M245.1 49.8l5.6-3.5M254.6 54.3l-1.3-7M287.1 15.9l-.5-.5M287.1 15.9l-2 7.7M286.6 15.4l-7.5-.3M285.1 23.6l-5.1 0M280 23.6l-2.4-2.2M277.6 21.4l-.7-4.7M276.9 16.7l2.2-1.6M292.7 16.4l-5.6-.5M286.5 7.9l.1 7.5M286.9 25.7l-1.8-2.1M279.5 7.4l-.4 7.7M277.8 30.6l2.2-7M271.2 25.1l6.4-3.7M269.5 5.1l3.4 2.3M269.5 5.1l-5.5 4.7M272.9 7.4l-.5 7.6M264 9.8l1 3.8M265 13.6l5 2.2M270 15.8l2.4-.8M268.7 0l.8 5.1M278.1 6.2l-5.2 1.2M260.4 7.9l3.6 1.9M276.9 16.7l-4.5-1.7M260.5 17.9l4.5-4.3M268.3 22.9l1.7-7.1M284.8 143.8l-.6 3.4M274.1 143.1l4.3 6.2M277.2 140l-2.6 2.1M278.4 149.3l5.8-2.1M294.7 148.4l-7 3.4M284.2 147.2l3.5 4.6M293.1 159.2l-5.8-4M287.7 151.8l-.4 3.4M267.8 134.7l2-2.1M278.3 135.5l-1-1.6M269.8 132.6l7.5 1.3M270.2 126.9l1.1-1.3M271 120.7l.3 4.9M268.5 118.6l-4.9 .8M270.2 126.9l-8.2-1.6M262 125.3l1.6-5.9M266.9 135l-4.4-1.9M262 125.3l-1.5 1.1M270.2 126.9l-.4 5.7M262.5 133.1l-2-6.7M256.8 141.6l-.3-4.7M262.5 133.1l-6 3.8M229.8 207.9l-7.1-.6M224.5 199.4l-2.7 6.6M222.7 207.3l-.9-1.3M145.9 309.1l-1 7.9M147.7 308.7l-1.8 .4M153.2 311.3l1.1 5.7M161 308.7l-3.4-2M143.7 292.9l1.5 1.5M145.5 299.3l-2.8 2.8M138.4 292.8l-1.6 7.2M143.7 292.9l-5.3-.1M142.7 302.1l-5.9-2.1M152.1 302l-.3-.6M145.9 309.1l-2.6-1.8M142.7 302.1l.6 5.2M136.5 309.8l1.2 7.2M127.7 310.4l.2 6.6M127.7 310.4l7.6-1.4M135.3 309l1.2 .8M143.3 307.3l-6.8 2.5M134.5 301.2l2.3-1.2M134.5 301.2l.8 7.8M120.8 278l-1.8-1.4M120.8 278l.3 5.4M113.8 285.2l4.6 1.2M121.1 283.4l-2.7 3M129.5 280.4l-1.2 4M126.4 276.8l3.1 3.6M120.8 278l5.6-1.2M121.1 283.4l7.2 1M95 308.2l6.4 .1M103.8 301.5l.3 .4M101.4 308.3l2.7-6.4M110.6 293.6l.9 .9M104.1 301.9l5.5 1.1M109.6 303l2.1-1.7M111.5 294.5l.2 6.8M143.7 292.9l2.2-6.3M152.8 293l-.9-6.6M145.9 286.6l6-.2M159.3 284.6l-6.9 1.2M154 294.1l5.1 .1M160.7 286.5l-1.6 7.7M151.9 286.4l.5-.6M122.3 269l4.4 .4M122.3 269l-3.3-6.8M126.7 269.4l1.5-7.1M119 262.2l.7-.9M119.7 261.3l5.7-1.6M125.4 259.7l2.8 2.6M126.4 276.8l1.3-6.4M119 271.8l3.3-2.8M127.7 270.4l-1-1M113.8 263.4l5.2-1.2M117.6 253.6l2.1 7.7M126.2 254.8l-.8 4.9M176.5 268.2l4.9 1.7M181.9 269.8l-.5 .1M176.7 262.7l5.4-2.9M181.9 269.8l3-6.9M184.9 262.9l-2.8-3.1M192.8 284.9l-4.1-7.3M188.7 277.6l.5-.8M198.1 284.2l-.8-8.3M197.7 284.6l.4-.4M189.2 276.8l8.1-.9M182.1 259.8l-.1-4M182 255.8l-6.3-1.9M172.7 259.3l1.8-4.8M175.7 253.9l-1.2 .6M166.2 260.4l1.7 .7M166.2 260.4l-.3-8.4M174.5 254.5l-6.9-3.7M165.9 252l1.7-1.2M168.8 197.9l4.9-3.1M169.4 203.1l-.6-5.2M169.4 203.1l5 2.1M176.5 197.4l-1.3 7.6M174.4 205.2l.8-.2M183.8 198.4l-2.8 8M175.2 205l5.8 1.4M167.9 221.6l6.8 .5M168.3 213.5l-.4 8.1M168.3 213.5l3.6-.8M171.9 212.7l4.1 2.7M174.7 222.1l1.3-6.7M171.9 212.7l2.5-7.5M181.6 207.1l-1.6 7.3M181 206.4l.6 .7M176 215.4l4-1M188.8 198.1l2.5 2.1M191.3 200.2l0 4.3M181.6 207.1l6.6 1.1M191.3 204.5l-3.1 3.7M202 205l2.5 1M207 212.4l-2.5-6.4M202 205l-3.8 3M207 212.4l-5.1 2.8M201.9 215.2l-4.1-3.3M198.2 208l-.4 3.9M102.4 197.7l1.2-.9M103.9 204.1l5.5 1.3M103.6 196.8l6.8 1.2M110.4 198l1.6 2.4M112 200.4l-2.6 5M126.5 189.7l-1.6 .8M124.9 190.5l.1 7.3M134.2 191.6l.6 4.7M125 197.8l2.3 1.6M127.3 199.4l7.5-3.1M142.2 196.8l2.1-6M142.2 196.8l-5.6 1.1M136.6 197.9l-1.8-1.6M96.8 188.6l7.5-.1M103.6 196.8l2-5.8M104.3 188.5l1.3 2.5M103.7 180.9l2.5 2.9M104.3 188.5l1.9-4.7M110.4 198l1.8-6.2M105.6 191l6.6 .8M170.4 188.7l3.3 2.1M170.4 188.7l-.8-4.5M173.7 190.8l4-6.8M169.6 184.2l4.8-3.6M174.4 180.6l3.3 3.4M164.9 191l-.6 4.7M164.9 191l5.5-2.3M164.3 195.7l4.5 2.2M173.8 191l-.1-.2M165.3 181.8l4.3 2.4M160.9 187.1l4 3.9M181.7 184.4l-4-.4M174.6 176.9l-.2 3.7M168.3 213.5l-.6-.3M169.4 203.1l-4.2 2.5M165.2 205.6l2.5 7.6M142.2 196.8l3.4 3.3M149.3 191.8l2.1 6.2M151.4 198l-5.8 2.1M167.1 228.7l.1-6.5M167.1 228.7l-5 2.2M159.7 229.2l2.4 1.7M159.7 229.2l-1.2-5.8M167.2 222.2l-6-1M158.5 223.4l2.7-2.2M167.7 213.2l-7.2 1.3M167.9 221.6l-.7 .6M161.2 221.2l-.7-6.7M215.2 199.6l4 5.9M215.2 199.6l-3.1-.6M212.1 199l-.5 .2M211.6 199.2l-1.8 4.6M209.8 203.8l3.7 4.7M219.2 205.5l-5.7 3M221.3 195.3l-6.1 4.3M221.8 206l-2.6-.5M214.6 190l-2.5 9M204.5 206l5.3-2.2M212.6 211.9l.9-3.4M209 213.1l3.6-1.2M207 212.4l2 .7M206 191.9l.9 4.5M206 191.9l-7-1.1M206.9 196.4l-5.8 4M198.2 191.4l.8-.6M198.2 191.4l-.5 6.4M197.7 197.8l3.4 2.6M208.4 189.1l-2.4 2.8M211.6 199.2l-4.7-2.8M199.6 184.4l-.6 6.4M202 205l-.9-4.6M190.1 189.9l8.1 1.5M191.3 200.2l6.4-2.4M191.3 204.5l6.9 3.5M199.9 308.2l-.7-.7M199.9 308.2l-1.1 8.8M181.3 287l3-1.9M181.3 287l-5.2-2.7M184.3 285.1l.4-5.5M176.1 284.3l1.3-5.5M184.7 279.6l-4.6-1.9M180.1 277.7l-2.7 1.1M181.3 291.5l3.4 2.2M189.9 287.6l-5.6-2.5M181.3 291.5l0-4.5M188.7 277.6l-4 2M168.9 276.2l-1.4 2.7M173.1 275.9l4.3 2.9M174.5 285.2l-4.8-.9M174.5 285.2l1.6-.9M189.2 276.8l-1.2-4.8M181.9 269.8l6.1 2.2M181.4 269.9l-1.3 7.8M279 295.2l6.8-.8M279 295.2l-.6 4.2M278.4 299.4l6.4 4.9M285.8 294.4l2.9 6.6M288.7 301l-3.9 3.3M290.7 301.2l-2-.2M293.3 291.2l-6.2 .9M287.1 292.1l-1.3 2.3M287.6 311.4l-3.5-4.6M284.1 306.8l.7-2.5M222.7 207.3l-1 5.6M212.6 211.9l2.9 2.3M221.7 212.9l-6.2 1.3M231.1 215.2l-.3 .4M221.7 212.9l1.9 2.7M230.8 215.6l-7.2 0M201.9 215.2l0 4.2M209 213.1l.1 7.6M209.1 220.7l-2.1 .8M207 221.5l-5.1-2.1M231.4 221.9l-.6-6.3M239.3 214.2l.9 7.3M231.4 221.9l4.6 1.9M240.2 221.5l-4.2 2.3M228.3 231l1.1-7.8M228.3 231l1.3 .8M229.6 231.8l6.6-3.2M231.4 221.9l-2 1.3M236 223.8l.2 4.8M206.8 284l6.5-.1M206.8 284l-1.5-1.3M205.3 282.7l.7-7.2M206 275.5l7.2 1.6M213.3 283.9l1.3-4.1M214.6 279.8l-1.4-2.7M205.9 275.4l.1 .1M205.9 275.4l-8.1-.2M197.3 275.9l.5-.7M198.1 284.2l7.2-1.5M292.5 239.5l-4.9-1.9M285.2 246.9l.7 .8M292.5 239.5l1.2 6.2M285.9 247.7l7.8-2M302.2 244.4l-7.5 2M302.5 244.7l-.3-.3M303.1 252.8l-2.3 1.2M300.8 254l-5.8-1.8M295 252.2l-.3-5.8M317 229.8l-5.8 .6M310.4 237.3l-.5-.6M311.2 230.4l-1.3 6.3M279.4 182l7.1-1.5M279.4 182l-.8 1.2M278.6 183.2l1.3 5.4M286.5 180.5l.4 .3M286.9 180.8l-.1 8.5M279.9 188.6l5.6 1.8M285.5 190.4l1.3-1.1M276.8 174.9l2.6 7.1M276.8 174.9l2.9-1.7M279.7 173.2l6.3 1.8M286 175l.5 5.5M272.8 174l4 .9M271.7 183.9l6.9-.7M276.4 191.7l3.5-3.1M288.4 172.1l-2.4 2.9M293.1 181.1l-6.2-.3M293.5 189.2l1.9-2M293.5 189.2l-6.7 .1M285.6 196.7l-.1-6.3M285.9 197.1l8.7-.5M294.6 196.6l-1.1-7.4M40.6 244.6l6.5 2.6M40.6 244.6l1.7-7.1M48.1 237.4l-5.8 .1M48.1 237.4l1.9 7.9M50 245.3l-2.9 1.9M46.4 253.3l.7-6.1M38.8 245.6l1.8-1M41.2 236.3l1.1 1.2M49.4 236.3l-1.3 1.1M53.1 245.8l-3.1-.5M91 268.6l-1.7 1.2M91 268.6l6.7 1.4M89.3 269.8l.6 8M97.7 270l-.6 7.5M89.9 277.8l7-.1M96.9 277.7l.2-.2M91.5 261.8l-.5 6.8M83.8 268.8l5.5 1M98.7 269.3l-1 .7M89.7 278l.2-.2M105.5 277.7l-8.4-.2M97.8 285l-.9-7.3M165.4 307.7l1.4-6M156.7 304l4.9-5.5M166.8 301.7l-5.2-3.2M159.1 294.2l1.9 1.7M161 295.9l.6 2.6M166.7 287.8l1.1 4.2M161 295.9l6.8-3.9M80.8 298.8l-3.4 2.8M81.8 308.7l-2.5-1.2M79.3 307.5l-1.9-5.9M72.2 294.2l1.8 6.7M65.9 294.4l-.4 7.1M65.5 301.5l5 1.6M70.5 303.1l3.5-2.2M77.4 301.6l-3.4-.7M41.6 300l5.7 2.4M47.7 308.1l-.4-5.7M38.5 302.9l1 5.9M47.7 308.1l-7.5 1.2M39.5 308.8l.7 .5M29.8 308.8l3.4 2.7M39.5 308.8l-6.3 2.7M59.1 301.1l-.9-7.1M59.1 301.1l-4 1.7M55.1 302.8l-4.1-3M56.9 293.2l1.3 .8M56.9 293.2l-5.7 2.4M51.2 295.6l-.2 4.2M64.2 293.2l-6 .8M63 302.9l-3.9-1.8M65.5 301.5l-2.5 1.4M63 302.9l-.6 5.8M62.4 308.7l-4.7 1.4M54.4 308l.7-5.2M49.7 309.6l-2-1.5M47.3 302.4l3.7-2.6M56.1 287l.8 6.2M47.6 293.1l3.6 2.5M70.5 303.1l.4 6.4M62.4 308.7l2.5 2.2M64.9 310.9l6-1.4M79.3 307.5l-6.2 3.7M70.9 309.5l2.2 1.7M91.9 103.2l-2.4 6.6M98.7 109.8l-4.3 3.1M89.5 109.8l4.9 3.1M98.4 119.4l-3.9-2.9M94.4 112.9l.1 3.6M81.7 126.3l1.8-6.9M81.7 126.3l6.7 2.1M88.4 128.4l2.5-3.4M90.9 125l-1.7-5.4M83.5 119.4l3.5-.7M87 118.7l2.2 .9M74.5 124.3l6.4 2.4M80.9 126.7l.8-.4M74.7 120l6.2-2.5M80.9 117.5l2.6 1.9M74.5 124.3l.2-4.3M96.8 125.3l-5.9-.3M94.5 116.5l-5.3 3.1M89.5 109.8l-2.1 .7M87.4 110.5l-.4 8.2M82.2 144l-8.6-1.8M82.2 135.8l1.3 7.1M79.2 134l3 1.8M79.2 134l-4 1.1M75.2 135.1l-1.6 7.1M97.4 139.4l0-6.4M97.4 139.4l-4.4 2.8M93 142.2l-2.1-.3M90.9 141.9l-1.9-8.6M97.4 133l-8-.3M89.4 132.7l-.4 .6M97.5 132.9l-.1 .1M102.8 141.8l-5.4-2.4M96.9 149.7l-3.9-7.5M88.2 143.4l2.7-1.5M82.2 135.8l6.8-2.5M88.4 128.4l1 4.3M80.9 126.7l-1.7 7.3M54.4 128l3.4-2.7M48 126.6l6.4 1.4M55.9 119.5l1.1 1.1M57.8 125.3l-.8-4.7M66.1 103.5l-1.7 7.1M58.1 110.3l5.6 .9M64.4 110.6l-.7 .6M57 120.6l8.4-3.5M63.7 111.2l1.7 5.9M83.3 109.3l-1.1-6.3M83.3 109.3l-3.3 2.6M80 111.9l-5.7-1.3M73.7 103.5l.3 6.7M73.7 103.5l5.6-2.3M74 110.2l.3 .4M82.2 103l-2.9-1.8M87.4 110.5l-4.1-1.2M88.5 100.6l-6.3 2.4M80.9 117.5l-.9-5.6M74.7 120l-2.6-2.9M72.1 117.1l2.2-6.5M71.1 102l2.6 1.5M64.4 110.6l9.6-.4M79.5 94.3l-.2 6.9M72.1 117.1l-5.9 .7M66.2 117.8l-.8-.7M48.5 39.8l-1.8-6.9M56 32.4l-5.4-3.5M46.7 32.9l3.9-4M55.3 21.8l-4.9 5M50.6 28.9l-.2-2.1M31.4 3.7l2.9 4M40.7 0l-.4 8.4M34.3 7.7l6 .7M48.2 8l-7.6 .7M40.3 8.4l.3 .3M25.6 7.5l2.4 7.5M18.8 14.3l6.1 2.1M24.9 16.4l3.1-1.4M16.3 23.2l6.7-.7M24.9 16.4l-1.9 6.1M31.2 14.6l3.1-6.9M31.2 14.6l-2 .7M28 15l1.2 .3M6.7 70.7l.2-5.3M6.7 70.7l1.8 1.6M8.5 72.3l6.9-1.2M15.4 71.1l-1.5-7.4M6.9 65.4l4.5-3.3M13.9 63.7l-2.5-1.6M0 72l6.7-1.3M0 61.7l6.9 3.7M16.3 71.6l7.3-4.1M16.3 71.6l-.9-.5M19.8 62l-5.9 1.7M10.9 58l.5 4.1M43.4 40.9l-5-3.5M46.7 32.9l-4.9-1.2M41.8 31.7l-1.9 1M39.9 32.7l-1.5 4.7M35.2 45.5l-.7-6.4M38.4 37.4l-3.9 1.7M26.8 40.1l5-2.1M34.5 39.1l-2.7-1.1M0 79.8l5.9 .8M0 90.3l6.7-2M6.7 88.3l-.8-7.7M7.9 96.7l-7.9-.7M10.6 92.9l-2.7 3.8M10.6 92.9l-.2-2.6M6.7 88.3l3.7 2M8.5 72.3l-.4 6.9M5.9 80.6l2.2-1.4M9.2 103l-9.2 .7M5.2 111.8l-5.2-.5M5.2 111.8l4.6-4M9.8 107.8l.4-4M10.2 103.8l-1-.8M7.9 96.7l1.3 6.3M9.3 118.2l-4.1-6.4M14.8 112.6l-5-4.8M18.9 105l-3.7-2.4M15.2 102.6l-5 1.2M10.6 92.9l6.1 3.9M15.2 102.6l1.5-5.8M41.2 71.6l6.3-1.4M41.2 71.6l.2 7.4M41.4 79l5 .9M50 72.8l-1.2 5.6M50 72.8l-2.5-2.6M46.4 79.9l2.4-1.5M48.8 64.1l-1.3 6.1M40 70.7l1.2 .9M39.7 80.4l1.7-1.4M48.1 87.2l-1.7-7.3M54.2 80.7l-5.4-2.3M55.6 72.3l-5.6 .5M38.5 22.3l-.4-5.6M38.5 22.3l4.2 1.7M42.7 24l2.5-.6M45.2 23.4l2.4-6.7M47.6 16.7l-7.3-2.2M40.3 14.5l-2.2 2.2M41.8 31.7l.9-7.7M50.4 26.8l-5.2-3.4M49.2 15.8l-1.6 .9M40.6 8.7l-.3 5.8M31.2 14.6l6.9 2.1M128.6 30.1l-2.8 2.2M120.4 22.6l.9 8.6M125.8 32.3l-4.5-1.1M137.4 246.3l3.6 .3M137.4 246.3l-3.4 8M141 246.6l2.8 5.9M134 254.3l1.3 1.9M135.3 256.2l7.1-.8M142.4 255.4l1.4-2.9M134.7 243.7l2.7 2.6M128.6 252.8l5.4 1.5M134.5 261.1l-6.3 1.2M134.5 261.1l.8-4.9M158.5 223.4l-6-1.5M160.5 214.5l-2.2-1.5M158.3 213l-6.1 3.8M152.2 216.8l.3 5.1M142.8 228.4l2.8 2.9M142.8 228.4l1.3-6.1M144.1 222.3l7.1 .8M151.2 223.1l-.7 6.8M145.6 231.3l4.9-1.4M136.9 228.9l.6 7.5M137.5 236.4l6.2 .6M142.8 228.4l-5.9 .5M145.6 231.3l-1.9 5.7M143.4 244.4l-2.4 2.2M143.4 244.4l.7-6.7M134.9 238.3l2.6-1.9M144.1 237.7l-.4-.7M151.2 223.1l1.3-1.2M159.7 229.2l-6.8 2.5M152.9 231.7l-2.4-1.8M150.8 159l.2 5M150.8 159l-6.1-2.2M151 164l-6.8 4M144.7 156.8l-2 1.4M142.7 158.2l-1.1 7.6M144.2 168l-2.6-2.2M153.1 157.4l-2.3 1.6M154.2 166.5l-3.2-2.5M144.6 152.1l.1 4.7M145 172l-.8-4M135.8 156.8l6.9 1.4M135.2 166.4l6.4-.6M153.3 94.3l5.5-.4M153.3 94.3l-1-7.8M158.8 93.9l1.4-4.9M160.2 89l-2.5-3.4M152.3 86.5l5.4-.9M151.2 96.3l2.1-2M159.7 94.9l-.9-1M151.6 86.1l.7 .4M167.4 88l-7.2 1M159.9 80.4l-2.2 5.2M48.9 206.6l5.2 1M48.9 206.6l-1.1-1.7M47.8 204.9l2.3-6.8M54.1 207.6l3.1-3.5M57.2 204.1l-2-6.7M50.1 198.1l4.6-1.1M55.2 197.4l-.5-.4M56.3 212.7l-2.2-5.1M46.1 213.6l2.8-7M41.8 204l6 .9M45.9 195.1l4.2 3M64.1 205.1l-6.9-1M63.7 196.6l-8.5 .8M64.2 197.2l-.5-.6M55.1 190.7l-.4 6.3M58.3 188.7l5.9 2.6M63.7 196.6l.5-5.3M79.4 181.9l-.2 .4M87.3 189.3l-5.8 .6M79.2 182.3l2.3 7.6M54.5 134.8l1.4 1.3M54.5 134.8l-7.4 .9M55.9 136.1l.6 5.1M47.1 135.7l1.8 7.1M48.9 142.8l5.9 .3M56.5 141.2l-1.7 1.9M46.5 135.4l.6 .3M54.4 128l.1 6.8M46.3 145.5l2.6-2.7M50.8 151.6l4.5-1.7M55.3 149.9l-.5-6.8M142.6 5.5l-.1-5.5M142.6 5.5l-7.7 3.1M150.9 33l-1.3 5.4M150.9 33l-6.3-2M149.6 38.4l-6.2 .5M143.4 38.9l-.1-7M144.6 31l-1.3 .9M152.3 41l-2.7-2.6M152.7 31.7l-1.8 1.3M146 25.5l-1.4 5.5M146 25.5l3.9-1M149.9 24.5l1.3 .7M142.6 39.7l.8-.8M137.7 30.3l5.6 1.6M135.4 38.5l-.4-6M135.4 38.5l1.5 1.3M146 25.5l-3.3-2.3M159 7.1l-.4-.2M158.6 6.9l-.4-6.9M144.7 7.4l.2 7.6M144.7 7.4l6.6-1.2M151.3 6.2l1.5 1.2M152.8 7.4l-.6 7.7M144.9 15l4.6 1.1M149.5 16.1l2.7-1M143.4 15.8l1.5-.8M142.6 5.5l2.1 1.9M151.5 0l-.2 6.2M158.6 6.9l-5.8 .5M156.7 16.5l-4.5-1.4M149.9 24.5l-.4-8.4M240.3 104.8l-.5 3.7M249.2 105.5l-.5 6.1M248.7 111.6l-2.5 .8M239.8 108.5l6.4 3.9M199.1 117.2l2.1 1M201.2 118.2l1.5 6.3M193 123.7l4.6 3.6M202.7 124.5l-5.1 2.8M192 134l5.2-2M197.2 132l.4-4.7M207.7 110.3l-.8 5.4M207.7 110.3l8 .5M206.9 115.7l4.3 3.8M215.7 110.8l.5 .5M216.2 111.3l-1.7 7.6M214.5 118.9l-3.3 .6M207.4 109.8l.3 .5M201.2 118.2l5.7-2.5M215.5 102.9l.2 7.9M206.4 126.4l-3.7-1.9M208.3 125.5l-1.9 .9M208.3 125.5l2.9-6M222.5 111.8l-.5-.5M222.5 111.8l9-.9M222 111.3l1.4-7.6M223.4 103.7l5.6-.4M231.5 110.9l-1.6-6.9M229.9 104l-.9-.7M223.5 118.2l-8.1 1.3M215.4 119.5l-.9-.6M223.5 118.2l-1-6.4M216.2 111.3l5.8 0M223.7 118.4l-.2-.2M223.7 118.4l6.9-.8M230.6 117.6l1.5-6.1M232.1 111.5l-.6-.6M222.5 102.9l.9 .8M229.7 95.3l-.7 8M237.4 101.9l-7.5 2.1M239.8 108.5l-3.2 2.9M232.1 111.5l4.5-.1M222.2 149.1l-6.2 2.1M224.6 152l-2.4-2.9M221.7 159.1l-4.6-.7M216 151.2l1.1 7.2M214.6 166.4l.6-6.7M206.9 159.9l2-1.5M205.8 165.6l1.1-5.7M208.9 158.4l6.3 1.3M215.2 159.7l1.9-1.3M216 151.2l-2.4-1.5M208.9 158.4l-.1-6.2M208.8 152.2l4.8-2.5M187.2 161.9l5.6-2.9M190.8 151.7l.5 .3M191.3 152l1.5 7M196.9 163.4l-.7-2.8M192.8 159l3.4 1.6M206.9 159.9l-6.3-3M196.2 160.6l4.4-3.7M312.8 96.2l-1.6-9M311.2 87.2l5.8-.8M305.6 89.2l4.5-2.4M311.2 87.2l-1.1-.4M301.9 79.3l6.2 0M310.1 86.8l-2-7.5M286.9 120.3l-3.5-3.4M286.9 120.3l-2.6 6.6M284.3 126.9l-5.2-.1M278.6 118.1l.2 8.4M278.6 118.1l4.8-1.2M279.1 126.8l-.3-.3M286.3 129.2l-2-2.3M277.3 133.9l1.8-7.1M277.3 117.5l1.3 .6M271.3 125.6l7.5 .9M284.6 110l.4 1.1M285 111.1l-1.6 5.8M291.7 129.3l2.4-3.1M286.9 120.3l5.1-.4M292 119.9l2.1 6.3M300.9 133l-2-6.5M308 126.9l-5.9-3.3M302.1 123.6l-3.2 2.9M298.9 126.5l-4.8-.3M286.4 166.1l-2-.9M287.3 155.2l-2.1 1.3M285.2 156.5l-.8 8.7M279.7 173.2l1.4-7.4M272.6 168l6.2-3.4M278.8 164.6l2.3 1.2M281.1 165.8l3.3-.6M261.1 116.6l-7.2 1.2M261.1 116.6l1.4-5.9M257.1 109.1l5.4 1.6M257.1 109.1l-4.7 4.7M252.4 113.8l1.5 4M253.9 117.9l0-.1M253.9 117.9l4.2 8.3M263.6 119.4l-2.5-2.8M260.5 126.4l-2.4-.2M263.2 110.3l-.7 .4M255.1 103.3l2 5.8M248.7 111.6l3.7 2.2M256.5 136.9l-3.1-3M258.1 126.2l-4.4 2.7M253.4 133.9l.3-5M247 141.4l-.4-5.4M253.4 133.9l-6.8 2.1M239.2 142.7l-.9-1.4M238.3 141.3l2.4-5.9M240.7 135.4l4.6-.5M246.6 136l-1.3-1.1M224.1 124.3l5.2 1.7M223.7 118.4l.4 5.9M230.6 117.6l2.1 3.3M232.7 120.9l-3.4 5.1M119.2 317l.4-7.1M127.7 310.4l0 0M127.7 310.4l-8.1-.5M129.1 293.5l-2-2.3M129.1 293.5l.2 6.3M127.1 291.2l-6.5 .7M120.9 300.8l6 .7M120.9 300.8l-1.3-7.2M120.6 291.9l-1 1.7M129.3 299.8l-2.4 1.7M128.7 285.5l8 1.6M137.2 291.6l-.5-4.5M128.7 285.5l-1.6 5.7M137.2 291.6l-8.1 1.9M134.5 301.2l-5.2-1.4M138.4 292.8l-1.2-1.2M128.3 284.4l.4 1.1M118.4 286.4l2.2 5.5M118.6 302.8l2.3-2M118.6 302.8l0 6.1M127.7 310.4l-.8-8.9M119.6 309.9l-1-1M111.5 294.5l8.1-.9M111.7 301.3l6.9 1.5M166.5 271.3l-5.9-1.2M160.4 280.5l-2.4-4M160.6 270.1l-2.6 6.4M150.4 276.6l2 9.2M150.4 276.6l0 0M158 276.5l-7.6 .1M143.7 262.9l1.5 4.9M143.7 262.9l-7.6 .5M145.2 267.8l-4.1 3.4M141.1 271.2l-5.4-3.5M136.1 263.4l-.4 4.3M145 260.4l-2.6-5M145 260.4l-1.3 2.5M134.5 261.1l1.6 2.3M127.7 270.4l4.1 .3M131.8 270.7l3.9-3M138 284.9l-2.7-6.8M138 284.9l5.6-.9M143.6 284l1.4-5.9M135.3 278.1l.2-.3M135.5 277.8l5.4-2.5M145 278.1l-4.1-2.8M129.5 280.4l5.8-2.3M136.7 287.1l1.3-2.2M145.9 286.6l-2.3-2.6M150.4 276.6l-5.4 1.5M131.8 270.7l3.7 7.1M141.1 271.2l-.2 4.1M150 269.4l.4 7.2M150 269.4l-4.8-1.6M188 272l3.5-3.8M197.8 275.2l-.7-4M197.1 271.2l-5.6-3M182 255.8l2.7-2.4M184.7 253.4l-1-5.9M177 246l-1.3 7.9M177 246l4.1-.3M181.1 245.7l2.6 1.8M201.9 219.4l-2.9 2.1M199 221.5l-5.4-1.7M197.8 211.9l-4.8 2.9M193.6 219.8l-.6-5M188.2 208.2l1.4 4.9M180 214.4l3.7 2.8M183.7 217.2l5.9-4.1M189.6 213.1l3.4 1.7M112.9 218.5l-4.9 4.6M103.5 214.2l5.3-1.4M112.9 218.5l.1-1.2M113 217.3l-4.2-4.5M109.4 205.4l1.2 2.5M108.8 212.8l1.8-4.9M145.6 200.1l-1.3 5.6M144.3 205.7l-1.7 .6M136.6 197.9l.3 6.2M142.6 206.3l-5.7-2.2M116.2 191.2l-2.6-.3M116.2 191.2l4-2.4M113.6 190.9l-2.8-7.8M120.2 188.8l-.8-5.3M119.4 183.5l-7.3-1.7M112.1 181.8l-1.3 1.3M118.3 199.9l-6.3 .5M118.3 199.9l-2.1-8.7M112.2 191.8l1.4-.9M118.3 199.9l.4 .2M125 197.8l-6.3 2.3M124.9 190.5l-4.7-1.7M106.2 183.8l4.6-.7M121.5 180.5l-2.1 3M112.5 176.6l-.4 5.2M152.7 198.6l.9 7.5M152.7 198.6l5-2M157.7 196.6l3 1.1M160.7 197.7l1.1 7.2M161.8 204.9l-4.2 3M157.6 207.9l-4-1.8M149 208.1l4.6-2M144.3 205.7l4.7 2.4M151.4 198l1.3 .6M156.8 189.7l.9 6.9M164.3 195.7l-3.6 2M165.2 205.6l-3.4-.7M158.3 213l-.7-5.1M149 208.1l-.3 6.1M148.7 214.2l3.5 2.6M277.6 271.1l.7 6M271.9 268l5.7 3.1M271.9 268l-3.1 1.8M269.3 276.4l-.5-6.6M269.3 276.4l1.2 1.2M270.5 277.6l7.8-.5M262 287.1l2.5-2.1M262 287.1l-.9 4M269.3 293.5l1.5-6.9M269.3 293.5l-6 .3M264.5 285l4.4-.3M261.1 291.1l2.2 2.7M268.9 284.7l1.9 1.9M270.3 294.7l-1-1.2M270.3 294.7l8-.2M278.3 294.5l-.8-7.8M277.5 286.7l-6.7-.1M261.8 300.1l1.5-6.3M261.8 300.1l-5.6 0M256.2 300.1l-.5-8M255.7 292.1l5.4-1M261.8 300.1l.1 .2M270.3 294.7l-.1 6.6M261.9 300.3l8.3 1M275.5 302l-5.3-.6M275.5 302l2.9-2.6M278.3 294.5l.7 .7M270.2 301.3l0 .1M214.5 228.1l-.7-5.8M214.5 228.1l2.5 1.8M217 229.9l4.4-.8M221.4 229.1l1.8-6.6M223.2 222.5l-1.2-1.8M222 220.7l-6.5 0M213.8 222.3l1.7-1.6M224.9 231.3l-3.5-2.2M228.3 231l-3.4 .3M229.4 223.2l-6.2-.7M223.6 215.6l-1.6 5.1M215.5 214.2l0 6.5M209.1 220.7l4.7 1.6M207 221.5l-2.1 8.2M214.5 228.1l-7.2 3M207.3 231.1l-2.4-1.4M224.9 231.3l-2.2 7.4M216.4 237.3l4.4 2.2M216.4 237.3l.6-7.4M222.7 238.7l-1.9 .8M255.7 292.1l-1.2-.6M254.5 291.5l-1.8-4.2M262 287.1l-6.5-3.7M255.5 283.4l-2.8 3.9M248.3 214l-.9 7.7M256 221.7l-1.8 1.7M247.4 221.7l6.8 1.7M240.2 221.5l4.7 1.7M247.4 221.7l-2.5 1.5M236.2 228.6l3.4 3.3M239.6 231.9l5.5-2.3M244.9 223.2l.2 6.4M262 230.5l-7.6-1.1M254.2 223.4l.2 6M266 244.6l-4.7 1.3M266 244.6l1.5-5.1M261.3 245.9l-2.5-7.6M267.5 239.5l-3.9-5.1M263.6 234.4l-4.8 3.9M270.1 247.3l-4.1-2.7M273.2 238.3l-5.7 1.2M263.7 233.6l-.1 .8M301.3 269.6l-7.6-.3M301.3 269.6l1.9-6M293.7 269.3l1.4-7.6M303.2 263.6l-3.8-2.9M299.4 260.7l-4.3 1M293.7 277.3l-.1-7.9M294.6 277.7l-.9-.4M302.8 271.8l-1.5-2.2M293.6 269.4l.1-.1M307 262.6l-3.8 1M300.8 254l-1.4 6.7M273.3 262.1l-1.4 5.9M273.3 262.1l3.5-1.5M277.6 271.1l3.7-3.9M281.3 267.2l-4.5-6.6M293.6 269.4l-6.6-1M285.9 267.2l1.1-7.2M287 268.4l-1.1-1.2M295.1 261.7l-2.8-2.2M292.3 259.5l-5.3 .5M295 252.2l-1.2 .9M292.3 259.5l1.5-6.4M285.9 247.7l.3 4M293.7 245.7l1 .7M293.8 253.1l-7.6-1.4M317 222.6l-6.3-.9M317 213.2l-5.2 .6M311.8 213.8l-1.1 7.9M311.2 230.4l-2.8-2.8M308.4 227.6l.2-4.8M310.7 221.7l-2.1 1.1M291.3 222.5l0-.1M286.4 214.6l1.1 .5M291.3 222.4l-3.8-7.3M302.3 231.1l2.4 5.1M302.3 231.1l-3.3-1.3M297.4 230.4l1.6-.6M297.4 230.4l-1.3 7.3M296.1 237.7l5.4 2.8M301.5 240.5l3.2-4.3M308.4 227.6l-6.1 3.5M309.9 236.7l-5.2-.5M304.4 220.8l4.2 2M300.7 222.3l3.7-1.5M300.7 222.3l-1.7 7.5M295 229.6l2.4 .8M300.7 222.3l-4.7-2.6M296 219.7l-4.7 2.7M292.5 239.5l3.6-1.8M302.2 244.4l-.7-3.9M171 293.9l-1.5 6.7M171 293.9l3-.9M174 293l2.5 .9M176.5 293.9l1.8 6.1M169.5 300.6l5.1 2.5M174.6 303.1l3.7-3.1M166.8 301.7l2.7-1.1M167.8 292l3.2 1.9M174.5 285.2l-.5 7.8M181.3 291.5l-4.8 2.4M183.3 300.8l-5-.8M175.3 308.5l-.7-5.4M40.2 309.3l1.9 7.7M33.2 311.5l-.4 5.5M64.9 310.9l-.4 6.1M73.1 311.2l.9 5.8M63.4 133.3l-2-6.5M63.4 133.3l1.7 1M65.1 134.3l6-2.4M66.4 124.1l-5 2.7M66.4 124.1l5 2.6M71.4 126.7l-.3 5.2M57.8 125.3l3.6 1.5M55.9 136.1l7.5-2.8M64.2 143.1l-7.7-1.9M65.7 141.7l-1.5 1.4M65.7 141.7l-.6-7.4M75.2 135.1l-4.1-3.2M65.7 141.7l7.6 .7M73.6 142.2l-.3 .2M66.2 117.8l.2 6.3M74.5 124.3l-3.1 2.4M73.2 150.2l-1.5 1.2M73.2 150.2l5.4 1.3M71.7 151.4l0 6.8M78.6 151.5l1.2 7.2M79.1 159.6l-5.7 .3M79.1 159.6l.7-.9M73.4 159.9l-1.7-1.7M73.3 142.4l-.1 7.8M81.2 149.7l-2.6 1.8M87.6 157l-7.8 1.7M81.6 167.6l-2.5-8M71.6 165.3l1.8-5.4M64.1 164.7l.2-5.6M64.3 159.1l7.4-.9M24.2 30.6l6.5 1.1M24.2 30.6l1-5.6M25.2 25l6.1-1.3M30.7 31.7l3.1-3.3M33.8 28.4l0-3.1M33.8 25.3l-2.5-1.6M22.5 31.9l1.7-1.3M31.8 38l-1.1-6.3M23 22.5l2.2 2.5M29.2 15.3l2.1 8.4M39.9 32.7l-6.1-4.3M38.5 22.3l-4.7 3M10.4 90.3l4.5-3.5M8.1 79.2l5.3 1.6M13.4 80.8l1.5 6M16.3 71.6l1.6 5.2M13.4 80.8l4.5-4M23.3 78.4l-.5 .3M22.8 78.7l-4.9-1.9M128.7 40.1l-2.1-1.5M128.7 40.1l.1 6.6M126.6 38.6l-6.3 2.6M128.8 46.7l-1.4 .9M127.4 47.6l-6.3-.4M120.3 41.2l0 5.1M121.1 47.2l-.8-.9M135.4 38.5l-6.7 1.6M125.8 32.3l.8 6.3M135.1 48.5l-6.3-1.8M127.2 55.7l.2-8.1M120.3 54.3l.8-7.1M111.8 47.9l0 0M111.8 47.9l8.5-1.6M114.6 23.7l-.2 7M121.3 31.2l-3.1 1.5M114.4 30.7l3.8 2M120.3 41.2l-3-2.4M118.2 32.7l-.9 6.1M111.8 47.9l.1-7.8M117.3 38.8l-5.4 1.3M136.9 228.9l-.6-.6M129.4 235.6l-.6-5.6M128.8 230l7.5-1.7M71.4 175.3l-1.4 6.8M79.2 182.3l-5.9 2.1M73.3 184.4l-3.3-2.3M62.4 181.2l4.1 2.1M70 182.1l-3.5 1.2M64.2 191.3l1.4-1.2M66.5 183.3l-.9 6.8M72.9 197.3l-1.7-6.2M72.9 197.3l6.5-2.4M79.4 194.9l.7-3.6M80.1 191.3l-6.6-2.7M71.2 191.1l2.3-2.5M72.7 197.6l.2-.3M65.6 190.1l5.6 1M83 199.2l-3.6-4.3M81.5 189.9l-1.4 1.4M73.3 184.4l.2 4.2M57.1 150.8l6.7-2.1M57.1 150.8l1.3 6.4M58.4 157.2l5.3 1.1M63.7 158.3l1.8-7.7M65.5 150.6l-1.7-1.9M64.2 143.1l-.4 5.6M55.3 149.9l1.8 .9M55.2 160.1l3.2-2.9M64.3 159.1l-.6-.8M71.7 151.4l-6.2-.8M191.3 152l6.6-1.9M191.7 141.1l5.2 1.3M196.9 142.4l1 7.7M208.8 152.2l-4.5-2.4M200.6 156.9l.1-5.4M204.3 149.8l-3.6 1.7M200.7 151.5l-2.8-1.4M208.3 125.5l5.9 3M215.4 119.5l2.6 7M214.2 128.5l3.8-2M224.1 124.3l-3.9 2.9M218 126.5l2.2 .7M232.5 148.9l-2.9-5.6M222.2 149.1l.8-5.5M223 143.6l6.6-.3M238.3 141.3l-6.2-1.8M229.6 143.3l2.5-3.8M308.9 78.4l8.1 0M308.9 78.4l.3-7.2M309.2 71.2l.4-.3M309.6 70.9l7.4 .7M308.1 79.3l.8-.9M301.8 69.4l7.4 1.8M311.1 63.7l-1.5 7.2M302.4 118.8l-.5 .7M302.4 118.8l-2.7-7.2M301.9 119.5l-8.7-1.1M293.2 118.4l.1-5.3M299.7 111.6l-4.8-.3M294.9 111.3l-1.6 1.8M307.1 117l-4.7 1.8M302.1 123.6l-.2-4.1M303.2 108.7l-3.5 2.9M292 119.9l1.2-1.5M285 111.1l8.3 2M293.7 104.9l1.2 6.4M271.4 158.7l6 2.2M271.4 158.7l1.8-5.5M277.4 160.9l3.3-4.6M280.7 156.3l-3.4-4.5M273.2 153.2l4.1-1.4M271.2 158.8l.2-.1M278.8 164.6l-1.4-3.7M268.3 148.6l4.9 4.6M285.2 156.5l-4.5-.2M278.4 149.3l-1.1 2.5M245.3 128.6l3.5-2.4M245.3 128.6l-5.8-2.3M239.5 126.3l-.8-4.8M248.7 121.7l-5.7-3M248.7 121.7l.1 4.5M238.7 121.5l1.8-2.1M240.5 119.4l2.5-.7M253.7 128.9l-4.9-2.7M245.3 134.9l0-6.3M253.9 117.9l-5.2 3.8M246.2 112.4l-3.2 6.3M232.7 120.9l6 .6M236.6 111.4l3.9 8M230.5 129.2l6.7 0M230.5 129.2l-1.8 4.4M231.7 137.3l-3-3.7M231.7 137.3l6.4-3.9M238.1 133.4l-.9-4.2M239.5 126.3l-2.3 2.9M229.3 126l1.2 3.2M222.3 133.8l-2.1-6.6M223.2 134.4l5.5-.8M222.3 133.8l.9 .6M223 143.6l-.2-.3M222.8 143.3l.4-8.9M232.1 139.5l-.4-2.2M240.7 135.4l-2.6-2M112.5 310.6l.2 6.4M104.5 311.8l-.8 5.2M104.5 311.8l5.5-2.8M110 309l2.5 1.6M118.6 308.9l-6.1 1.7M101.4 308.3l3.1 3.5M109.6 303l.4 6M160.5 270l-8.4-2.2M160.5 270l.8-8.2M159.7 260.8l1.6 1M159.7 260.8l-6.8 1.8M152.9 262.6l-.8 5.2M160.6 270.1l-.1-.1M150 269.4l2.1-1.6M166.2 260.4l-4.9 1.4M150.2 259.5l-5.2 .9M150.2 259.5l2.7 3.1M184.9 262.9l5.6 0M184.7 253.4l6 1.2M190.5 262.9l.2-8.3M191.5 268.2l-.2-4.6M190.5 262.9l.8 .7M168.7 246.8l-2-3.1M168.7 246.8l7.3-1.5M166.7 243.7l1.4-5.2M176 245.3l-1.4-6.6M174.6 238.7l-4.2-1.4M170.4 237.3l-2.3 1.2M177 246l-1-.7M167.6 250.8l1.1-4M177.9 236.4l5.1 .3M183 236.7l.4 .6M177.9 236.4l-3.3 2.3M183.4 237.3l-2.3 8.4M162.1 230.9l.1 4.5M170.6 230.5l-3.5-1.8M170.6 230.5l-.2 6.8M162.2 235.4l5.9 3.1M162.2 235.4l-3.8 3.4M166.7 243.7l-7.1 .1M159.6 243.8l-1.2-5M144.1 237.7l7.1 1.4M143.4 244.4l7.6 1.6M151 246l.2-6.9M152.9 231.7l.7 5.5M158.4 238.8l-4.8-1.6M151.2 239.1l2.4-1.9M193.6 219.8l-3.7 3.7M183.7 217.2l.6 3.7M184.3 220.9l5.6 2.6M118.7 200.1l.7 6.2M110.6 207.9l7.1 .6M119.4 206.3l-1.7 2.2M113 217.3l5.8-3.5M117.7 208.5l1.1 5.3M142.6 206.3l-2.2 7.5M148.7 214.2l-5.1 1.8M140.4 213.8l3.2 2.2M144.1 222.3l-.5-.7M143.6 221.6l0-5.6M136.3 228.3l-.3-6.1M143.6 221.6l-7.6 .6M277.6 309.3l1.7 7.7M284.1 306.8l-6.5 2.5M275.5 302l1.8 7.2M277.6 309.3l-.3-.1M200.4 300.5l7.9 1.3M200.4 300.5l2.4-7.7M202.8 292.8l3.4-.6M208.3 301.8l2-1.5M210.3 300.3l-2-7.2M206.2 292.2l2.1 .9M199.8 300.9l.6-.4M199.3 290.5l3.5 2.3M206.8 284l-.6 8.2M213.3 283.9l.9 1.5M208.3 293.1l5.5-2.4M214.2 285.4l-.4 5.3M285.1 286.5l-6.5-.9M285.1 286.5l3.4-4M278.6 285.6l0-8.3M278.6 277.3l6.2-.6M284.8 276.7l4 2.9M288.5 282.5l.3-2.9M287.1 292.1l-2-5.6M277.5 286.7l1.1-1.1M294.8 287.7l-6.3-5.2M270.5 277.6l-1.6 7.1M278.3 277.1l.3 .2M281.3 267.2l4.6 0M287 268.4l-2.2 8.3M293.7 277.3l-4.9 2.3M261.9 300.3l.7 8.1M270.2 301.4l-1.5 6.1M262.6 308.4l6.1-.9M277.3 309.2l-5.9 .9M271.4 310.1l-1.9 6.9M268.7 307.5l2.7 2.6M216.4 237.3l-3.2 1.4M207.3 231.1l1.4 5.8M213.2 238.7l-4.5-1.8M222.5 278.7l.2-.6M222.5 278.7l-7.9 1.1M222.7 278.1l-3.7-7.4M213.2 277.1l3-6.7M219 270.7l-2.8-.3M205.9 275.4l1-6M206.9 269.4l7.6-.7M216.2 270.4l-1.7-1.7M268.5 253.9l-5.4 .4M268.5 253.9l1.9 6.6M263.1 254.3l.3 8.3M270.4 260.5l-7 2.1M265.1 268.4l-1.9-5.5M268.8 269.8l-3.7-1.4M273.3 262.1l-2.9-1.6M263.2 262.9l.2-.3M263.1 254.3l-.8-.5M271.2 251.3l-2.7 2.6M261.3 245.9l-.3 .4M261 246.3l1.3 7.5M232.7 245.8l-3-2.1M232.7 245.8l2.2-.4M234.9 245.4l3.2-8.1M229.7 243.7l-1.3-3.3M228.4 240.4l2.8-4.7M231.2 235.7l6.9 1.6M238.5 237.1l-.4 .2M238.5 237.1l6.6 3M245.1 240.1l0 3.6M245.1 243.7l-6.2 4M238.9 247.7l-4-2.3M222.7 238.7l5.7 1.7M229.6 231.8l1.6 3.9M239.6 231.9l-1.1 5.2M247.4 231.2l5.9-.5M247.4 231.2l-.7 7.7M253.3 230.7l1.5 7M246.7 238.9l6.4 .3M253.1 239.2l1.7-1.5M245.1 229.6l2.3 1.6M254.4 229.4l-1.1 1.3M245.1 240.1l1.6-1.2M258.8 238.3l-4-.6M239.7 294.9l-.8-.7M236.7 287l2.2 7.2M236.7 287l2.8-2.7M244.9 292.8l1.1-6.5M244.9 292.8l-5.2 2.1M239.5 284.3l6.5 2M244.9 292.8l3.6 2.5M248.5 295.3l6-3.8M252.7 287.3l-6.7-1M246 286.3l0 0M255.5 283.4l-.2-3.1M248.1 279.1l-2.1 7.2M248.1 279.1l5.4-.1M255.3 280.3l-1.8-1.3M264.5 285l-3.5-7.2M255.3 280.3l5.7-2.5M269.3 276.4l-8 .8M265.1 268.4l-4.8 3.6M261.3 277.2l-1-5.2M261.3 277.2l-.3 .6M277.3 254.1l0 5.8M277.3 254.1l8.2-1.1M277.3 259.9l9.2-.5M285.5 253l1 6.4M276.2 252.5l1.1 1.6M276.8 260.6l.5-.7M286.2 251.7l-.7 1.3M287 260l-.5-.6M310.6 205.1l-1.2 .5M311.8 213.8l-2.9-2M309.4 205.6l-.5 6.2M304.4 220.8l-.4-7M308.9 211.8l-4.9 2M22.3 84.3l-6.1 2.7M22.3 84.3l3.8 3.9M16.2 87l5.1 7.5M26.1 88.2l-3.4 6.4M22.7 94.6l-1.4-.1M22.8 78.7l-.5 5.6M14.9 86.8l1.3 .2M30.5 87.3l-4.4 .9M16.7 96.8l4.6-2.3M23.7 95.7l-1-1.1M106.2 38.9l4.1 .1M106.2 38.9l-2.4-5.2M110.3 39l1.2-7.4M103.8 33.7l3.4-3.9M107.2 29.8l4.3 1.8M103.1 42.2l3.1-3.3M111.9 40.1l-1.6-1.1M97.8 32.9l6 .8M114.4 30.7l-2.9 .9M106.1 25l1.1 4.8M126.9 228.3l-.2-4.8M126.9 228.3l-6.1 2.3M126.7 223.5l-4.6-2.3M122.1 221.2l-4.4 2.2M120.8 230.6l-4.2-2.7M117.7 223.4l-1.1 4.5M120.4 237.9l.4-7.3M128.8 230l-1.9-1.7M121.4 215.2l-2.6-1.4M121.4 215.2l.7 6M112.9 218.5l4.8 4.9M114 228.8l2.6-.9M196.9 142.4l3.5-1.7M204.3 149.8l1.2-6.8M200.4 140.7l5.1 2.3M197.2 132l3.5 2.4M200.4 140.7l.3-6.3M206.4 126.4l-.6 6.1M200.7 134.4l5.1-1.9M151.5 246.7l6.7-.5M151.5 246.7l-1.3 4.9M152 254.4l-1.8-2.8M152 254.4l5.8 .3M158.2 246.2l2.1 5.2M157.8 254.7l2.5-3.3M159.6 243.8l-1.4 2.4M151 246l.5 .7M143.8 252.5l6.4-.9M150.2 259.5l1.8-5.1M159.7 260.8l-1.9-6.1M165.9 252l-5.6-.6M181.1 223.7l.2 4.7M181.1 223.7l-6.3-1.5M181.3 228.4l-5.3 1.9M174.8 222.2l-1.1 7.1M173.7 229.3l2.3 1M184 230.9l-2.7-2.5M184 230.9l6.7-2.5M190.7 228.4l-.8-4.9M184.3 220.9l-3.2 2.8M174.7 222.1l.1 .1M177.9 236.4l-1.9-6.1M183 236.7l1-5.8M170.6 230.5l3.1-1.2M140.4 213.8l-3.6 .6M136 222.2l-.5-.6M136.8 214.4l-1.3 7.2M126.7 223.5l2.5-2.2M129.2 221.3l6.3 .3M237.8 302.2l-5.8-.2M229.6 309.4l2.4-7.4M229.6 309.4l1.3 1.3M230.9 310.7l7.2-.9M237.8 302.2l.8 6.9M238.6 309.1l-.5 .7M246.1 302.6l3.3-3.4M246.1 302.6l1.3 5.3M247.4 307.9l7.1-.1M249.4 299.2l5.7 1.7M255.1 300.9l-.6 6.9M248.5 295.3l.9 3.9M239.7 294.9l-.4 5.8M239.3 300.7l6.8 1.9M246.3 309.3l-7.7-.2M239.3 300.7l-1.5 1.5M246.3 309.3l1.1-1.4M256.2 300.1l-1.1 .8M262.1 309l.5-.6M255.6 309.1l-1.1-1.3M255.6 309.1l6.5-.1M246.3 309.3l.7 7.7M238.1 309.8l1.1 7.2M230.9 310.7l-.2 6.3M238.9 294.2l-9 .2M232 302l-1.5-1.5M229.9 294.4l.6 6.1M213.2 238.7l-.5 5.5M208.7 236.9l-4.2 3.4M206 246.2l-1.5-5.9M206 246.2l.2 .1M212.7 244.2l-6.5 2.1M199 221.5l.4 6.5M190.7 228.4l1.2 1M191.9 229.4l7.5-1.4M204.9 229.7l-2.8 .2M199.4 228l2.7 1.9M183.4 237.3l6.1 1.6M183.7 247.5l6.7-3.1M190.4 244.4l-.9-5.5M191.9 229.4l.7 6.7M189.5 238.9l3.1-2.8M202.1 229.9l-3.3 7.8M192.6 236.1l6.2 1.6M204.5 240.3l-5-1.4M199.5 238.9l-.7-1.2M201 248.5l-4.2-3.2M201 248.5l-.7 5.2M192.4 253.5l5.3 1.4M192.4 253.5l.6-7.3M193 246.2l3.8-.9M200.3 253.7l-2.6 1.2M206 246.2l-5 2.3M199.5 238.9l-2.7 6.4M191.3 263.6l6.3-1.4M190.7 254.6l1.7-1.1M197.6 262.2l.1-7.3M190.4 244.4l2.6 1.8M261 246.3l-6.2 .8M253.1 239.2l.4 6.8M253.5 246l1.3 1.1M245.1 243.7l2.7 2.8M253.5 246l-5.7 .5M304 213.8l-3.7-1.9M296 219.7l.4-5.8M300.3 211.9l-3.9 2M287.5 215.1l7.7-1.7M295.2 213.4l1.2 .5M288.5 206l2.4 0M295.2 213.4l-4.3-7.4M208.8 134.9l-2 7.5M208.8 134.9l4.3-.4M213.1 134.5l1.9 1.5M215 136l.4 6.1M206.8 142.4l6.3 1.7M213.1 144.1l2.3-2M205.8 132.5l3 2.4M205.5 143l1.3-.6M214.2 128.5l-1.1 6M222.3 133.8l-7.3 2.2M222.8 143.3l-7.4-1.2M213.6 149.7l-.5-5.6M200.3 253.7l4 2M206.2 246.3l2.6 5.4M204.3 255.7l4.5-4M200.9 266.8l-1-3.3M200.9 266.8l5.9 2.4M199.9 263.5l5.7-4.1M206.8 269.2l1.5-8.4M208.3 260.8l-2.7-1.4M197.1 271.2l3.8-4.4M197.6 262.2l2.3 1.3M206.9 269.4l-.1-.2M204.3 255.7l1.3 3.7M126.7 213.2l-.2-5.9M126.7 213.2l2.1 1.4M128.8 214.6l6-1.6M134.8 213l-.9-6.7M133.9 206.3l-5.4-1M128.5 205.3l-2 2M119.4 206.3l7.1 1M121.4 215.2l5.3-2M129.2 221.3l-.4-6.7M136.8 214.4l-2-1.4M136.9 204.1l-3 2.2M127.3 199.4l1.2 5.9M262.1 309l1.8 8M255.6 309.1l-1.6 7.9M208.3 301.8l-1.1 7.5M199.9 308.2l7.1 1.3M207 309.5l.2-.2M236.7 287l-5.5-.3M229.9 294.4l-1.4-1.5M228.5 292.9l2.7-6.2M222.5 278.7l1.3 3.9M214.2 285.4l7.5 .6M223.8 282.6l-2.1 3.4M216.8 292.9l5.7-1.5M216.8 292.9l-.5 7.2M216.3 300.1l5.3 .7M221.6 300.8l3.1-7.9M222.5 291.4l2.2 1.5M213.8 290.7l3 2.2M221.7 286l.8 5.4M210.3 300.3l4.5 .7M214.8 301l1.5-.9M228.5 292.9l-3.8 0M230.5 300.5l-7.4 1.9M223.1 302.4l-1.5-1.6M230 284.4l1.2 2.3M230 284.4l-6.2-1.8M263.2 262.9l-7.1 .1M262.3 253.8l-6 1.9M256.1 263l.2-7.3M254.8 247.1l-1.4 6.6M256.3 255.7l-2.9-2M230.8 254l6.9 2.3M230.1 252.6l.7 1.4M238.9 247.7l1.5 5M230.1 252.6l2.6-6.8M237.7 256.3l2.7-3.6M247.8 246.5l-1.1 6.8M240.4 252.7l6.3 .6M253.4 253.7l-5.2 1.1M246.7 253.3l1.5 1.5M228.3 259.7l2.5 3.2M230.8 254l-2.5 5.7M237.7 256.3l.6 4.4M238.3 260.7l-.2 .4M230.8 262.9l7.3-1.8M238.3 277.2l.2-.2M238.3 277.2l-5.7 1.3M238.5 277l-1.1-6.4M237.4 270.6l-8-1.7M232.6 278.5l-4.5-3.6M228.1 274.9l.8-5.7M228.9 269.2l.5-.3M248.1 279.1l-2.3-2.7M239.5 284.3l-1.2-7.1M245.8 276.4l-7.3 .6M230 284.4l2.6-5.9M230.8 262.9l-1.4 6M238.1 261.1l1 7.2M239.1 268.3l-1.7 2.3M222.7 278.1l5.4-3.2M223.2 267.7l-4.2 3M223.2 267.7l5.7 1.5M295.1 203.4l5.1 3.3M295.1 203.4l.8-5.7M295.9 197.7l4.5-1.1M300.4 196.6l4.1 2.7M300.2 206.7l5-3.4M304.5 199.3l.7 4M300.3 211.9l-.1-5.2M290.9 206l4.2-2.6M294.6 196.6l1.3 1.1M302.2 190.1l-1.8 6.5M309.6 195.4l-5.1 3.9M309.4 205.6l-4.2-2.3M223.2 267.7l-1.7-7.5M214.5 268.7l.1-7.1M214.6 261.6l6.9-1.4M208.3 260.8l4.2-.7M214.6 261.6l-2.1-1.5M208.8 251.7l4.3 1.2M212.5 260.1l.6-7.2M228.3 259.7l-6.6 .2M221.7 259.9l-.2 .3M229.6 309.4l-5.9-.7M223.1 302.4l.3 6M223.7 308.7l-.3-.3M214.8 301l.7 8.1M223.4 308.4l-7.9 .7M207.2 309.3l7.8 .5M215.5 309.1l-.5 .7M207 309.5l-.3 7.5M256.1 263l-8.6-2M256.1 263l-1.3 6.7M254.8 269.7l-.8 .5M254 270.2l-6 0M248 270.2l-1.6-1.9M246.4 268.3l1-7.2M247.4 261.1l.1-.1M248.2 254.8l-.7 6.2M256.1 263l0 0M260.3 272l-5.5-2.3M253.5 279l.5-8.8M245.8 276.4l2.2-6.2M239.1 268.3l7.3 0M238.3 260.7l9.1 .4M223.9 251.6l-1-4.3M223.9 251.6l-2.6 3M221.3 254.6l-6.7-2.7M220.5 245.4l2.4 1.9M220.5 245.4l-4.9 1.8M215.6 247.2l-1 4.7M230.1 252.6l-6.2-1M229.7 243.7l-6.8 3.6M221.7 259.9l-.4-5.3M213.1 252.9l1.5-1M220.8 239.5l-.3 5.9M212.7 244.2l2.9 3M223.7 308.7l-1.3 8.3M215 309.8l.7 7.2"/></g>
<path d="M315.5 2V315.5H2" fill="none" stroke="#fff" stroke-width="1"/>
<path d="M314.5 2V314.5H2" fill="none" stroke="#555" stroke-width="1"/>
<rect x="0.5" y="0.5" width="316" height="316" fill="none" stroke="#000" stroke-width="1"/>
<path d="M1.4 316V1.4H316" fill="none" stroke="#1a1a1a" stroke-width=".8"/>
</svg>
<!-- v scrollbar of preview -->
<div class="abs" style="left:338px;top:74px;width:16px;height:503px;background:linear-gradient(90deg,#e9e9e9,#f3f3f3 30%,#f0f0f0)"></div>
<svg class="abs" style="left:342px;top:78px" width="9" height="6"><path d="M0.5 5L4.5 1L8.5 5z" fill="url(#au)"/></svg>
<svg class="abs" style="left:342px;top:566px" width="9" height="6"><path d="M0.5 1L4.5 5L8.5 1z" fill="url(#ad)"/></svg>
<!-- bottom zoom row -->
<div class="abs" style="left:18px;top:577px;width:336px;height:16px;background:#f0f0f0"></div>
<div class="abs zb" style="left:23px;top:579px"></div>
<div class="abs zb" style="left:40px;top:579px"></div>
<style>
.zb{width:11px;height:11px;border:1px solid #9c9c9c;border-right-color:#707070;border-bottom-color:#5e5e5e;border-radius:2px;background:linear-gradient(#fff,#ececec);box-shadow:.5px .5px 0 #cfcfcf}
</style>
<div class="abs" style="left:26px;top:584px;width:5px;height:1px;background:#000"></div>
<div class="abs" style="left:43px;top:584px;width:5px;height:1px;background:#000"></div>
<div class="abs" style="left:45px;top:582px;width:1px;height:5px;background:#000"></div>
<div class="abs" style="left:56px;top:577px;width:56px;height:16px;background:#fff;border-bottom:1px solid #e6e6e6"></div>
<div class="abs" style="left:130px;top:577px;width:119px;height:16px;background:#f7f7f7"></div>
<div class="abs t" style="left:70px;top:579px;font-size:10.5px;letter-spacing:-.4px">62.8%</div>
<div class="abs" style="left:112px;top:577px;width:18px;height:16px;border:1px solid #868686;background:linear-gradient(#f0f0f0,#e2e2e2)"></div>
<svg class="abs" style="left:117px;top:585px" width="8" height="5"><path d="M0 0h8v1L4.5 4.5h-1L0 1z" fill="#000"/></svg>
<div class="abs" style="left:249px;top:577px;width:1px;height:10px;background:#000"></div>
<svg class="abs" style="left:255px;top:580px" width="6" height="9"><path d="M5 .5L1 4.5L5 8.5z" fill="url(#al)"/></svg>
<svg class="abs" style="left:327px;top:580px" width="6" height="9"><path d="M1 .5L5 4.5L1 8.5z" fill="url(#ar)"/></svg>

<!-- divider -->
<div class="abs" style="left:364px;top:71px;width:1px;height:523px;background:#b4b4b4"></div>
<div class="abs" style="left:365px;top:71px;width:1px;height:523px;background:#fcfcfc"></div>

<!-- collapse button -->
<div class="abs" style="left:378px;top:76.5px;width:16px;height:16px;border-radius:8px;border:1px solid #c4c4c4;border-right-color:#b4b4b4;border-bottom-color:#adadad;background:radial-gradient(circle at 45% 40%,#fff 0,#fdfdfd 55%,#ececec 100%);box-shadow:.5px .5px 1.5px rgba(0,0,0,.18)"></div>
<svg class="abs" style="left:381px;top:79px" width="10" height="10"><path d="M1.3 4.8L4.6 1.5L7.9 4.8M1.3 8.8L4.6 5.5L7.9 8.8" fill="none" stroke="#000" stroke-width="1.35"/></svg>

<!-- OK / Cancel -->
<div class="abs btn" style="left:404px;top:76px;border-color:#2e9fd0;box-shadow:inset 0 0 0 1px #5ecbf0"></div>
<div class="abs t" style="left:404px;top:81px;width:204px;text-align:center;font-size:12px;transform-origin:50% 50%;transform:scaleX(.9)">OK</div>
<div class="abs btn" style="left:404px;top:106px"></div>
<div class="abs t" style="left:404px;top:111px;width:204px;text-align:center;font-size:12px;transform-origin:50% 50%;transform:scaleX(.96)">Cancel</div>
<style>
.btn{width:204px;height:20px;border:1px solid #707070;border-radius:3px;background:linear-gradient(#f2f2f2 0,#ebebeb 48%,#dddddd 52%,#cfcfcf 100%);box-shadow:inset 0 0 0 1px #fafafa}
</style>

<!-- group box -->
<div class="abs" style="left:377px;top:153px;width:253px;height:283px;border:1px solid #d9d9d9;border-radius:3px;box-shadow:inset 1px 1px 0 #fcfcfc, 1px 1px 0 #fcfcfc"></div>
<div class="abs" style="left:390px;top:152px;width:204px;height:4px;background:#f0f0f0"></div>
<!-- dropdown -->
<div class="abs" style="left:392px;top:143px;width:200px;height:21px;border:1px solid #707070;border-radius:3px;background:linear-gradient(#f2f2f2 0,#ebebeb 48%,#dddddd 52%,#cfcfcf 100%);box-shadow:inset 0 0 0 1px #fafafa"></div>
<div class="abs t" style="left:395.5px;top:147.5px;transform:scaleX(.887)">Stained Glass</div>
<svg class="abs" style="left:580px;top:152px" width="8" height="5"><path d="M0 0h7.6L3.8 4.4z" fill="#000"/></svg>

<!-- sliders -->
<div class="abs t" style="left:403.5px;top:176px;transform:scaleX(.88)"><u>C</u>ell Size</div>
<div class="abs t" style="left:403.5px;top:217px;transform:scaleX(.898)"><u>B</u>order Thickness</div>
<div class="abs t" style="left:403.5px;top:258px;transform:scaleX(.955)"><u>L</u>ight Intensity</div>
<div class="abs tb" style="left:572px;top:172px"></div><div class="abs t" style="left:576.5px;top:176px;transform:scaleX(.9)">5</div>
<div class="abs tb" style="left:572px;top:213px"></div><div class="abs t" style="left:576.5px;top:217px;transform:scaleX(.9)">2</div>
<div class="abs tb" style="left:572px;top:254px;border-color:#3d7bad #a4c9e3 #b7d9ed #b5cfe7"></div><div class="abs t" style="left:576.5px;top:258px;transform:scaleX(.9)">3</div>
<style>
.tb{width:32px;height:18px;border-radius:2px;background:#fff;border:1px solid #e3e9ef;border-top-color:#abadb3;border-top-color:#dfe3e8}
.tr{width:203px;height:4px;border:1px solid #fff;border-top-color:#8e8e8e;border-left-color:#9a9a9a;border-radius:1px 0 0 1px;background:#f3f3f3}
</style>
<div class="abs tr" style="left:401px;top:198px"></div>
<div class="abs tr" style="left:401px;top:239px"></div>
<div class="abs tr" style="left:401px;top:280px"></div>
<svg class="abs" style="left:413px;top:193px" width="7" height="11"><use href="#thumb"/></svg>
<svg class="abs" style="left:411px;top:234px" width="7" height="11"><use href="#thumb"/></svg>
<svg class="abs" style="left:460px;top:275px" width="7" height="11"><use href="#thumb"/></svg>
<svg width="0" height="0" style="position:absolute"><defs>
<linearGradient id="ad" x1="0" y1="0" x2="0" y2="1"><stop offset="0" stop-color="#6e6e6e"/><stop offset="1" stop-color="#b4b4b4"/></linearGradient><linearGradient id="au" x1="0" y1="1" x2="0" y2="0"><stop offset="0" stop-color="#6e6e6e"/><stop offset="1" stop-color="#b4b4b4"/></linearGradient><linearGradient id="ar" x1="0" y1="0" x2="1" y2="0"><stop offset="0" stop-color="#6e6e6e"/><stop offset="1" stop-color="#b4b4b4"/></linearGradient><linearGradient id="al" x1="1" y1="0" x2="0" y2="0"><stop offset="0" stop-color="#6e6e6e"/><stop offset="1" stop-color="#b4b4b4"/></linearGradient>
<linearGradient id="tg" x1="0" y1="0" x2="0" y2="1"><stop offset="0" stop-color="#4a9c5a"/><stop offset=".3" stop-color="#a8dda6"/><stop offset=".45" stop-color="#e2fadb"/><stop offset=".7" stop-color="#d4f3cc"/><stop offset=".75" stop-color="#379646"/><stop offset="1" stop-color="#2c8a3e"/></linearGradient>
<g id="thumb"><path d="M3.5 .3L6.6 3.6V9.4Q6.6 10.4 5.6 10.4H1.4Q.4 10.4 .4 9.4V3.6z" fill="url(#tg)" stroke="#3c8f4c" stroke-width=".8"/></g>
</defs></svg>

<!-- layer panel -->
<div class="abs" style="left:379px;top:448px;width:249px;height:122px;background:#f0f0f0;border:1px solid #8e8e8e;border-right-color:#fff;border-bottom-color:#fff"></div>
<div class="abs" style="left:380px;top:449px;width:247px;height:120px;border-left:1px solid #696969;border-top:1px solid #696969"></div>
<div class="abs" style="left:381px;top:450px;width:229px;height:119px;background:#ababab"></div>
<div class="abs" style="left:381px;top:450px;width:229px;height:24px;background:#a0a0a0"></div>
<div class="abs" style="left:381px;top:450px;width:23px;height:24px;background:#fbfbfb"></div>
<div class="abs" style="left:384px;top:453px;width:17px;height:17px;background:#f1f1f1;border:1px solid #fff;border-top-color:#8f8f8f;border-left-color:#8f8f8f"></div>
<div class="abs" style="left:404px;top:450px;width:1px;height:24px;background:#000"></div>
<div class="abs" style="left:381px;top:474px;width:229px;height:1px;background:#000"></div>
<svg class="abs" style="left:386px;top:456.5px" width="12" height="11" viewBox="0 0 12 11"><path d="M.3 5.2C2 1.6 9 .6 11.6 4.2" fill="none" stroke="#000" stroke-width="1.5"/><path d="M.6 5.4C2.5 3 9 2.6 11.2 5.2C9 9.6 2.6 9.8 .6 5.4z" fill="#fff" stroke="#000" stroke-width=".9"/><circle cx="5.6" cy="5.6" r="2.7" fill="#000"/><rect x="4.2" y="4.6" width="1.1" height="1.1" fill="#fff"/></svg>
<div class="abs t" style="left:408.5px;top:456px;transform:scaleX(.887)">Stained Glass</div>
<div class="abs" style="left:610px;top:450px;width:17px;height:119px;background:linear-gradient(90deg,#e9e9e9,#f3f3f3 30%,#f0f0f0)"></div>
<svg class="abs" style="left:614px;top:456px" width="9" height="6"><path d="M0.5 5L4.5 1L8.5 5z" fill="url(#au)"/></svg>
<svg class="abs" style="left:614px;top:557px" width="9" height="6"><path d="M0.5 1L4.5 5L8.5 1z" fill="url(#ad)"/></svg>
<!-- new / trash icons -->
<svg class="abs" style="left:487px;top:579px" width="10" height="10" viewBox="0 0 10 10"><defs><linearGradient id="ng" x1="0" y1="0" x2="1" y2="1"><stop offset="0" stop-color="#bbb"/><stop offset="1" stop-color="#fff"/></linearGradient></defs><rect x="0" y="0" width="10" height="10" fill="#111"/><rect x=".8" y=".8" width="7.4" height="7.4" fill="url(#ng)"/><path d="M1 4.5H4.5V8" fill="none" stroke="#111" stroke-width="1"/><path d="M2 5.5L3.8 7.3" stroke="#555" stroke-width=".8"/></svg>
<svg class="abs" style="left:509px;top:578px" width="10" height="13" viewBox="0 0 10 13"><path d="M3.2 1.8Q5 .2 6.8 1.8" fill="none" stroke="#b4b4b4" stroke-width="1"/><ellipse cx="5" cy="3.2" rx="4.4" ry="1.6" fill="#e6e6e6" stroke="#b4b4b4" stroke-width=".9"/><path d="M1.2 4.6L1.9 11.4Q5 13 8.1 11.4L8.8 4.6" fill="#e9e9e9" stroke="#bcbcbc" stroke-width=".9"/><path d="M3.2 5.6V11.4M5 5.8V11.8M6.8 5.6V11.4" stroke="#b0b0b0" stroke-width=".9" fill="none"/></svg>
<!-- resize grip -->
<svg class="abs" style="left:633px;top:594px" width="9" height="9"><rect x="7" y="1" width="1" height="1" fill="#fff"/><rect x="6" y="0" width="1" height="1" fill="#a3a3a3"/><rect x="4" y="4" width="1" height="1" fill="#fff"/><rect x="3" y="3" width="1" height="1" fill="#a3a3a3"/><rect x="7" y="4" width="1" height="1" fill="#fff"/><rect x="6" y="3" width="1" height="1" fill="#a3a3a3"/><rect x="1" y="7" width="1" height="1" fill="#fff"/><rect x="0" y="6" width="1" height="1" fill="#a3a3a3"/><rect x="4" y="7" width="1" height="1" fill="#fff"/><rect x="3" y="6" width="1" height="1" fill="#a3a3a3"/><rect x="7" y="7" width="1" height="1" fill="#fff"/><rect x="6" y="6" width="1" height="1" fill="#a3a3a3"/></svg>
</body></html>
